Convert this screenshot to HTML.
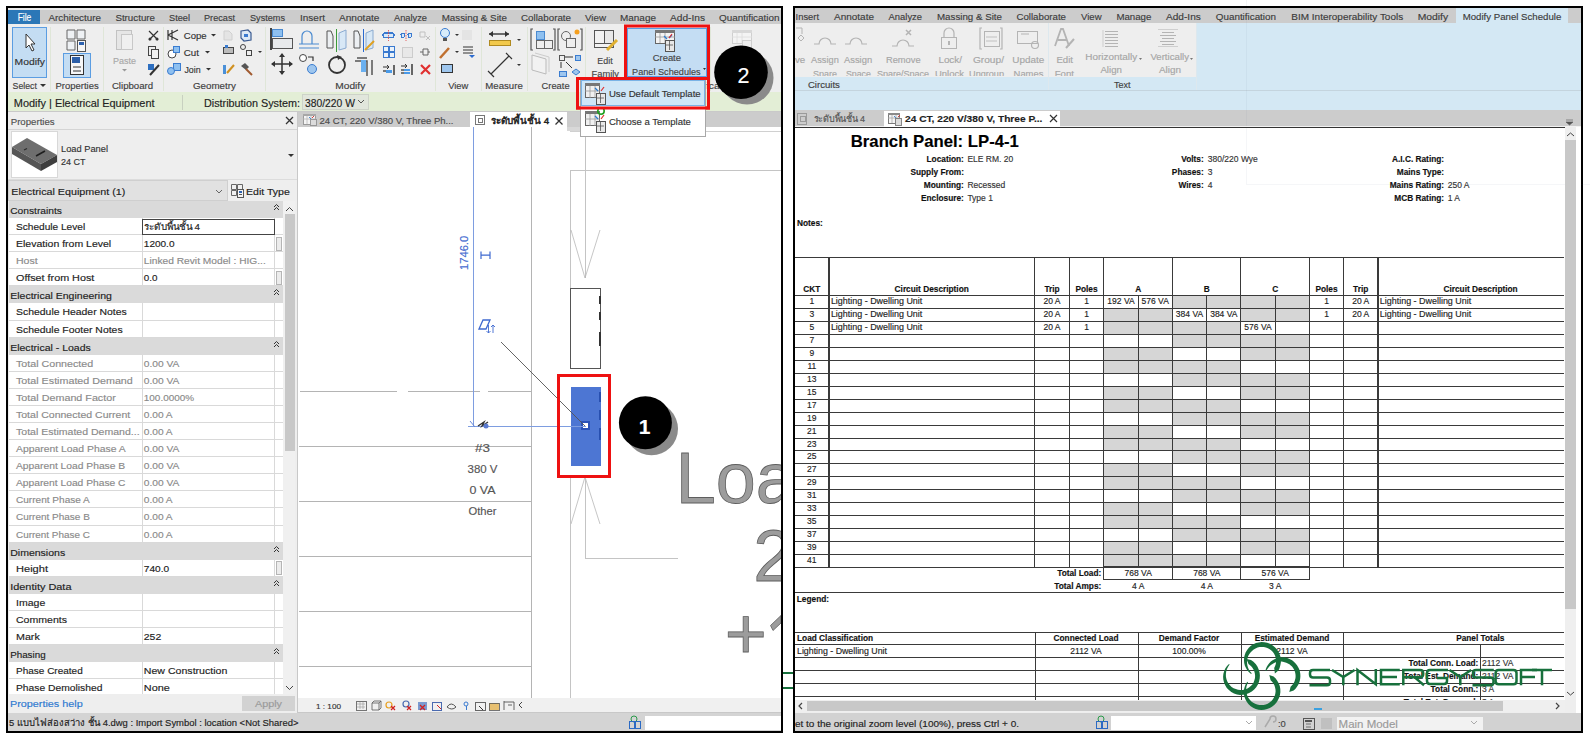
<!DOCTYPE html>
<html><head><meta charset="utf-8"><title>Revit Panel Schedule</title>
<style>
html,body{margin:0;padding:0;background:#fff;}
body{width:1590px;height:742px;overflow:hidden;}
svg{display:block;font-family:"Liberation Sans",sans-serif;}
text{font-family:"Liberation Sans",sans-serif;stroke:currentColor;stroke-width:0.15px;}
</style></head><body>
<svg width="1590" height="742" viewBox="0 0 1590 742">
<rect x="6" y="6" width="777" height="727" fill="#000" shape-rendering="crispEdges" />
<rect x="8" y="8" width="773" height="723" fill="#eeeeee" shape-rendering="crispEdges" />
<rect x="8" y="8" width="773" height="16" fill="#cccccc" shape-rendering="crispEdges" />
<rect x="8" y="8" width="773" height="2" fill="#e8e8e8" shape-rendering="crispEdges" />
<rect x="8" y="10" width="32" height="14" fill="#2b77b7" shape-rendering="crispEdges" />
<rect x="8" y="24" width="773" height="68" fill="#eeeeee" shape-rendering="crispEdges" />
<rect x="8" y="92" width="773" height="19" fill="#e3eed6" shape-rendering="crispEdges" />
<rect x="8" y="111" width="773" height="1" fill="#c9c9c9" shape-rendering="crispEdges" />
<rect x="8" y="112" width="289" height="601" fill="#eeeeee" shape-rendering="crispEdges" />
<rect x="297" y="112" width="1" height="601" fill="#c8c8c8" shape-rendering="crispEdges" />
<rect x="298" y="112" width="483" height="15" fill="#cccccc" shape-rendering="crispEdges" />
<rect x="298" y="127" width="483" height="571" fill="#ffffff" shape-rendering="crispEdges" />
<rect x="298" y="698" width="483" height="14" fill="#f0f0f0" shape-rendering="crispEdges" />
<rect x="8" y="713" width="773" height="18" fill="#d4d4d4" shape-rendering="crispEdges" />
<rect x="793" y="6" width="790" height="727" fill="#000" shape-rendering="crispEdges" />
<rect x="795" y="8" width="786" height="723" fill="#eeeeee" shape-rendering="crispEdges" />
<rect x="795" y="8" width="786" height="15" fill="#cccccc" shape-rendering="crispEdges" />
<rect x="795" y="23" width="786" height="87" fill="#d4e8f4" shape-rendering="crispEdges" />
<rect x="795" y="23" width="401" height="53" fill="#eeeeee" shape-rendering="crispEdges" />
<rect x="795" y="110" width="786" height="16" fill="#cccccc" shape-rendering="crispEdges" />
<rect x="795" y="126" width="786" height="1" fill="#f2f2f2" shape-rendering="crispEdges" />
<rect x="795" y="127" width="786" height="1" fill="#333333" shape-rendering="crispEdges" />
<rect x="795" y="128" width="770" height="572" fill="#ffffff" shape-rendering="crispEdges" />
<rect x="1565" y="127" width="11" height="573" fill="#eeeeee" shape-rendering="crispEdges" />
<rect x="795" y="700" width="770" height="12" fill="#eeeeee" shape-rendering="crispEdges" />
<rect x="795" y="713" width="786" height="18" fill="#d4d4d4" shape-rendering="crispEdges" />
<text x="17.7" y="21" font-size="10" fill="#ffffff" color="#ffffff" textLength="13.6" lengthAdjust="spacingAndGlyphs" >File</text>
<text x="48.5" y="21" font-size="9.4" fill="#3c3c3c" color="#3c3c3c" textLength="52.5" lengthAdjust="spacingAndGlyphs" >Architecture</text>
<text x="115.4" y="21" font-size="9.4" fill="#3c3c3c" color="#3c3c3c" textLength="39.6" lengthAdjust="spacingAndGlyphs" >Structure</text>
<text x="169" y="21" font-size="9.4" fill="#3c3c3c" color="#3c3c3c" textLength="21" lengthAdjust="spacingAndGlyphs" >Steel</text>
<text x="204" y="21" font-size="9.4" fill="#3c3c3c" color="#3c3c3c" textLength="31" lengthAdjust="spacingAndGlyphs" >Precast</text>
<text x="250" y="21" font-size="9.4" fill="#3c3c3c" color="#3c3c3c" textLength="35" lengthAdjust="spacingAndGlyphs" >Systems</text>
<text x="300" y="21" font-size="9.4" fill="#3c3c3c" color="#3c3c3c" textLength="25" lengthAdjust="spacingAndGlyphs" >Insert</text>
<text x="339" y="21" font-size="9.4" fill="#3c3c3c" color="#3c3c3c" textLength="40.5" lengthAdjust="spacingAndGlyphs" >Annotate</text>
<text x="394" y="21" font-size="9.4" fill="#3c3c3c" color="#3c3c3c" textLength="33" lengthAdjust="spacingAndGlyphs" >Analyze</text>
<text x="441.7" y="21" font-size="9.4" fill="#3c3c3c" color="#3c3c3c" textLength="65.3" lengthAdjust="spacingAndGlyphs" >Massing &amp; Site</text>
<text x="521" y="21" font-size="9.4" fill="#3c3c3c" color="#3c3c3c" textLength="50" lengthAdjust="spacingAndGlyphs" >Collaborate</text>
<text x="585" y="21" font-size="9.4" fill="#3c3c3c" color="#3c3c3c" textLength="21" lengthAdjust="spacingAndGlyphs" >View</text>
<text x="620" y="21" font-size="9.4" fill="#3c3c3c" color="#3c3c3c" textLength="36" lengthAdjust="spacingAndGlyphs" >Manage</text>
<text x="670" y="21" font-size="9.4" fill="#3c3c3c" color="#3c3c3c" textLength="35" lengthAdjust="spacingAndGlyphs" >Add-Ins</text>
<text x="719" y="21" font-size="9.4" fill="#3c3c3c" color="#3c3c3c" textLength="60.5" lengthAdjust="spacingAndGlyphs" >Quantification</text>
<text x="12.6" y="89" font-size="9.4" fill="#404040" color="#404040" textLength="24.3" lengthAdjust="spacingAndGlyphs" >Select</text>
<path d="M40 84 h6 l-3 3z" fill="#333" />
<text x="55.5" y="89" font-size="9.4" fill="#404040" color="#404040" textLength="43.2" lengthAdjust="spacingAndGlyphs" >Properties</text>
<text x="111.9" y="89" font-size="9.4" fill="#404040" color="#404040" textLength="41.3" lengthAdjust="spacingAndGlyphs" >Clipboard</text>
<text x="192.9" y="89" font-size="9.4" fill="#404040" color="#404040" textLength="43.0" lengthAdjust="spacingAndGlyphs" >Geometry</text>
<text x="335.3" y="89" font-size="9.4" fill="#404040" color="#404040" textLength="30.0" lengthAdjust="spacingAndGlyphs" >Modify</text>
<text x="448.2" y="89" font-size="9.4" fill="#404040" color="#404040" textLength="20.2" lengthAdjust="spacingAndGlyphs" >View</text>
<text x="485.3" y="89" font-size="9.4" fill="#404040" color="#404040" textLength="37.5" lengthAdjust="spacingAndGlyphs" >Measure</text>
<text x="541.6" y="89" font-size="9.4" fill="#404040" color="#404040" textLength="28.0" lengthAdjust="spacingAndGlyphs" >Create</text>
<rect x="50" y="27" width="1" height="64" fill="#dfe6d8" shape-rendering="crispEdges" />
<rect x="103" y="27" width="1" height="64" fill="#dfe6d8" shape-rendering="crispEdges" />
<rect x="163" y="27" width="1" height="64" fill="#dfe6d8" shape-rendering="crispEdges" />
<rect x="265" y="27" width="1" height="64" fill="#dfe6d8" shape-rendering="crispEdges" />
<rect x="435" y="27" width="1" height="64" fill="#dfe6d8" shape-rendering="crispEdges" />
<rect x="481" y="27" width="1" height="64" fill="#dfe6d8" shape-rendering="crispEdges" />
<rect x="527" y="27" width="1" height="64" fill="#dfe6d8" shape-rendering="crispEdges" />
<rect x="585" y="27" width="1" height="64" fill="#dfe6d8" shape-rendering="crispEdges" />
<text x="13.8" y="106.5" font-size="11" fill="#222" color="#222" textLength="140.7" lengthAdjust="spacingAndGlyphs" >Modify | Electrical Equipment</text>
<rect x="182" y="95" width="1" height="15" fill="#c8d0c0" shape-rendering="crispEdges" />
<text x="204" y="106.5" font-size="11" fill="#222" color="#222" textLength="96" lengthAdjust="spacingAndGlyphs" >Distribution System:</text>
<rect x="302" y="94" width="67" height="16" fill="#e1e6dc" shape-rendering="crispEdges" />
<rect x="302.5" y="94.5" width="66" height="15" fill="none" stroke="#cdd3c8" stroke-width="1" shape-rendering="crispEdges" />
<text x="305" y="107" font-size="11" fill="#222" color="#222" textLength="50" lengthAdjust="spacingAndGlyphs" >380/220 W</text>
<path d="M358 100 l3 3 l3 -3" fill="none" stroke="#555" stroke-width="1" />
<text x="10.7" y="124.5" font-size="9.4" fill="#505050" color="#505050" textLength="44.0" lengthAdjust="spacingAndGlyphs" >Properties</text>
<path d="M286 117 l7 7 M293 117 l-7 7" fill="none" stroke="#333" stroke-width="1.3" />
<rect x="8" y="129" width="289" height="1" fill="#d4d4d4" shape-rendering="crispEdges" />
<rect x="11" y="131" width="47" height="47" fill="#ffffff" shape-rendering="crispEdges" />
<rect x="11.5" y="131.5" width="46" height="46" fill="none" stroke="#d8d8d8" stroke-width="1" shape-rendering="crispEdges" />
<path d="M12 147 L27 138 L57 155 L41 164 Z" fill="#6e6e6e" />
<path d="M12 147 L41 164 L41 171 L12 154 Z" fill="#555555" />
<path d="M41 164 L57 155 L57 162 L41 171 Z" fill="#3e3e3e" />
<path d="M36 156 l9 -5" fill="none" stroke="#1e1e1e" stroke-width="1.6" />
<path d="M24 150 l3 -1.5" fill="none" stroke="#2a2a2a" stroke-width="1.2" />
<text x="61" y="152" font-size="9.4" fill="#333" color="#333" textLength="47" lengthAdjust="spacingAndGlyphs" >Load Panel</text>
<text x="61" y="165" font-size="9.4" fill="#333" color="#333" textLength="24.5" lengthAdjust="spacingAndGlyphs" >24 CT</text>
<path d="M288 154 h6 l-3 3z" fill="#333" />
<rect x="8" y="179" width="289" height="1" fill="#dcdcdc" shape-rendering="crispEdges" />
<rect x="8" y="181" width="219" height="20" fill="#e1e1e1" shape-rendering="crispEdges" />
<rect x="8.5" y="180.5" width="219" height="20" fill="none" stroke="#cfcfcf" stroke-width="1" shape-rendering="crispEdges" />
<text x="11.3" y="194.5" font-size="9.6" fill="#222" color="#222" textLength="114.0" lengthAdjust="spacingAndGlyphs" >Electrical Equipment (1)</text>
<path d="M216 190 l3 3 l3 -3" fill="none" stroke="#666" stroke-width="1" />
<path d="M231.5 184.5 h5 v5 h-5z M231.5 190.5 h5 v5 h-5z M237.5 184.5 h5 v5 h-5z" fill="#f0f0f0" stroke="#666" stroke-width="1" />
<rect x="237.5" y="189.5" width="6" height="8" fill="#f4f4f4" stroke="#555" stroke-width="1" shape-rendering="crispEdges" />
<rect x="239" y="191" width="3" height="2" fill="#2d62b0" shape-rendering="crispEdges" />
<rect x="239" y="194" width="3" height="1" fill="#555" shape-rendering="crispEdges" />
<text x="246" y="194.5" font-size="9.6" fill="#222" color="#222" textLength="43.8" lengthAdjust="spacingAndGlyphs" >Edit Type</text>
<rect x="9" y="201" width="274" height="493" fill="#ffffff" shape-rendering="crispEdges" />
<rect x="9" y="201" width="274" height="17" fill="#dadada" shape-rendering="crispEdges" />
<text x="10.2" y="213.7" font-size="9.4" fill="#222" color="#222" textLength="51.8" lengthAdjust="spacingAndGlyphs" >Constraints</text>
<path d="M274 207 l2.5 -2.5 l2.5 2.5 M274 210 l2.5 -2.5 l2.5 2.5" fill="none" stroke="#333" stroke-width="1" />
<rect x="9" y="234" width="274" height="1" fill="#d9d9d9" shape-rendering="crispEdges" />
<rect x="142" y="218" width="1" height="17" fill="#d9d9d9" shape-rendering="crispEdges" />
<rect x="274" y="218" width="1" height="17" fill="#d9d9d9" shape-rendering="crispEdges" />
<text x="16" y="229.6" font-size="9.4" fill="#222" color="#222" textLength="69.2" lengthAdjust="spacingAndGlyphs" >Schedule Level</text>
<text x="143.8" y="229.6" font-size="9.4" fill="#222" color="#222" textLength="56.2" lengthAdjust="spacingAndGlyphs" >ระดับพื้นชั้น 4</text>
<rect x="9" y="251" width="274" height="1" fill="#d9d9d9" shape-rendering="crispEdges" />
<rect x="142" y="235" width="1" height="17" fill="#d9d9d9" shape-rendering="crispEdges" />
<rect x="274" y="235" width="1" height="17" fill="#d9d9d9" shape-rendering="crispEdges" />
<text x="16" y="246.6" font-size="9.4" fill="#222" color="#222" textLength="95.2" lengthAdjust="spacingAndGlyphs" >Elevation from Level</text>
<text x="143.8" y="246.6" font-size="9.4" fill="#222" color="#222" textLength="30.7" lengthAdjust="spacingAndGlyphs" >1200.0</text>
<rect x="9" y="268" width="274" height="1" fill="#d9d9d9" shape-rendering="crispEdges" />
<rect x="142" y="252" width="1" height="17" fill="#d9d9d9" shape-rendering="crispEdges" />
<rect x="274" y="252" width="1" height="17" fill="#d9d9d9" shape-rendering="crispEdges" />
<text x="16" y="263.6" font-size="9.4" fill="#8a8a8a" color="#8a8a8a" textLength="21.7" lengthAdjust="spacingAndGlyphs" >Host</text>
<text x="143.8" y="263.6" font-size="9.4" fill="#8a8a8a" color="#8a8a8a" textLength="122.0" lengthAdjust="spacingAndGlyphs" >Linked Revit Model : HIG...</text>
<rect x="9" y="285" width="274" height="1" fill="#d9d9d9" shape-rendering="crispEdges" />
<rect x="142" y="269" width="1" height="17" fill="#d9d9d9" shape-rendering="crispEdges" />
<rect x="274" y="269" width="1" height="17" fill="#d9d9d9" shape-rendering="crispEdges" />
<text x="16" y="280.6" font-size="9.4" fill="#222" color="#222" textLength="78.3" lengthAdjust="spacingAndGlyphs" >Offset from Host</text>
<text x="143.8" y="280.6" font-size="9.4" fill="#222" color="#222" textLength="13.7" lengthAdjust="spacingAndGlyphs" >0.0</text>
<rect x="9" y="286" width="274" height="17" fill="#dadada" shape-rendering="crispEdges" />
<text x="10.2" y="298.7" font-size="9.4" fill="#222" color="#222" textLength="101.7" lengthAdjust="spacingAndGlyphs" >Electrical Engineering</text>
<path d="M274 292 l2.5 -2.5 l2.5 2.5 M274 295 l2.5 -2.5 l2.5 2.5" fill="none" stroke="#333" stroke-width="1" />
<rect x="9" y="320" width="274" height="1" fill="#d9d9d9" shape-rendering="crispEdges" />
<rect x="142" y="303" width="1" height="18" fill="#d9d9d9" shape-rendering="crispEdges" />
<rect x="274" y="303" width="1" height="18" fill="#d9d9d9" shape-rendering="crispEdges" />
<text x="16" y="314.6" font-size="9.4" fill="#222" color="#222" textLength="110.8" lengthAdjust="spacingAndGlyphs" >Schedule Header Notes</text>
<rect x="9" y="337" width="274" height="1" fill="#d9d9d9" shape-rendering="crispEdges" />
<rect x="142" y="321" width="1" height="17" fill="#d9d9d9" shape-rendering="crispEdges" />
<rect x="274" y="321" width="1" height="17" fill="#d9d9d9" shape-rendering="crispEdges" />
<text x="16" y="332.6" font-size="9.4" fill="#222" color="#222" textLength="106.6" lengthAdjust="spacingAndGlyphs" >Schedule Footer Notes</text>
<rect x="9" y="338" width="274" height="17" fill="#dadada" shape-rendering="crispEdges" />
<text x="10.2" y="350.7" font-size="9.4" fill="#222" color="#222" textLength="80.6" lengthAdjust="spacingAndGlyphs" >Electrical - Loads</text>
<path d="M274 344 l2.5 -2.5 l2.5 2.5 M274 347 l2.5 -2.5 l2.5 2.5" fill="none" stroke="#333" stroke-width="1" />
<rect x="9" y="371" width="274" height="1" fill="#d9d9d9" shape-rendering="crispEdges" />
<rect x="142" y="355" width="1" height="17" fill="#d9d9d9" shape-rendering="crispEdges" />
<rect x="274" y="355" width="1" height="17" fill="#d9d9d9" shape-rendering="crispEdges" />
<text x="16" y="366.6" font-size="9.4" fill="#8a8a8a" color="#8a8a8a" textLength="77.2" lengthAdjust="spacingAndGlyphs" >Total Connected</text>
<text x="143.8" y="366.6" font-size="9.4" fill="#8a8a8a" color="#8a8a8a" textLength="35.6" lengthAdjust="spacingAndGlyphs" >0.00 VA</text>
<rect x="9" y="388" width="274" height="1" fill="#d9d9d9" shape-rendering="crispEdges" />
<rect x="142" y="372" width="1" height="17" fill="#d9d9d9" shape-rendering="crispEdges" />
<rect x="274" y="372" width="1" height="17" fill="#d9d9d9" shape-rendering="crispEdges" />
<text x="16" y="383.6" font-size="9.4" fill="#8a8a8a" color="#8a8a8a" textLength="116.8" lengthAdjust="spacingAndGlyphs" >Total Estimated Demand</text>
<text x="143.8" y="383.6" font-size="9.4" fill="#8a8a8a" color="#8a8a8a" textLength="35.6" lengthAdjust="spacingAndGlyphs" >0.00 VA</text>
<rect x="9" y="405" width="274" height="1" fill="#d9d9d9" shape-rendering="crispEdges" />
<rect x="142" y="389" width="1" height="17" fill="#d9d9d9" shape-rendering="crispEdges" />
<rect x="274" y="389" width="1" height="17" fill="#d9d9d9" shape-rendering="crispEdges" />
<text x="16" y="400.6" font-size="9.4" fill="#8a8a8a" color="#8a8a8a" textLength="99.8" lengthAdjust="spacingAndGlyphs" >Total Demand Factor</text>
<text x="143.8" y="400.6" font-size="9.4" fill="#8a8a8a" color="#8a8a8a" textLength="50.3" lengthAdjust="spacingAndGlyphs" >100.0000%</text>
<rect x="9" y="422" width="274" height="1" fill="#d9d9d9" shape-rendering="crispEdges" />
<rect x="142" y="406" width="1" height="17" fill="#d9d9d9" shape-rendering="crispEdges" />
<rect x="274" y="406" width="1" height="17" fill="#d9d9d9" shape-rendering="crispEdges" />
<text x="16" y="417.6" font-size="9.4" fill="#8a8a8a" color="#8a8a8a" textLength="114.2" lengthAdjust="spacingAndGlyphs" >Total Connected Current</text>
<text x="143.8" y="417.6" font-size="9.4" fill="#8a8a8a" color="#8a8a8a" textLength="28.8" lengthAdjust="spacingAndGlyphs" >0.00 A</text>
<rect x="9" y="439" width="274" height="1" fill="#d9d9d9" shape-rendering="crispEdges" />
<rect x="142" y="423" width="1" height="17" fill="#d9d9d9" shape-rendering="crispEdges" />
<rect x="274" y="423" width="1" height="17" fill="#d9d9d9" shape-rendering="crispEdges" />
<text x="16" y="434.6" font-size="9.4" fill="#8a8a8a" color="#8a8a8a" textLength="123.6" lengthAdjust="spacingAndGlyphs" >Total Estimated Demand...</text>
<text x="143.8" y="434.6" font-size="9.4" fill="#8a8a8a" color="#8a8a8a" textLength="28.8" lengthAdjust="spacingAndGlyphs" >0.00 A</text>
<rect x="9" y="456" width="274" height="1" fill="#d9d9d9" shape-rendering="crispEdges" />
<rect x="142" y="440" width="1" height="17" fill="#d9d9d9" shape-rendering="crispEdges" />
<rect x="274" y="440" width="1" height="17" fill="#d9d9d9" shape-rendering="crispEdges" />
<text x="16" y="451.6" font-size="9.4" fill="#8a8a8a" color="#8a8a8a" textLength="109.7" lengthAdjust="spacingAndGlyphs" >Apparent Load Phase A</text>
<text x="143.8" y="451.6" font-size="9.4" fill="#8a8a8a" color="#8a8a8a" textLength="35.6" lengthAdjust="spacingAndGlyphs" >0.00 VA</text>
<rect x="9" y="473" width="274" height="1" fill="#d9d9d9" shape-rendering="crispEdges" />
<rect x="142" y="457" width="1" height="17" fill="#d9d9d9" shape-rendering="crispEdges" />
<rect x="274" y="457" width="1" height="17" fill="#d9d9d9" shape-rendering="crispEdges" />
<text x="16" y="468.6" font-size="9.4" fill="#8a8a8a" color="#8a8a8a" textLength="109.2" lengthAdjust="spacingAndGlyphs" >Apparent Load Phase B</text>
<text x="143.8" y="468.6" font-size="9.4" fill="#8a8a8a" color="#8a8a8a" textLength="35.6" lengthAdjust="spacingAndGlyphs" >0.00 VA</text>
<rect x="9" y="490" width="274" height="1" fill="#d9d9d9" shape-rendering="crispEdges" />
<rect x="142" y="474" width="1" height="17" fill="#d9d9d9" shape-rendering="crispEdges" />
<rect x="274" y="474" width="1" height="17" fill="#d9d9d9" shape-rendering="crispEdges" />
<text x="16" y="485.6" font-size="9.4" fill="#8a8a8a" color="#8a8a8a" textLength="109.5" lengthAdjust="spacingAndGlyphs" >Apparent Load Phase C</text>
<text x="143.8" y="485.6" font-size="9.4" fill="#8a8a8a" color="#8a8a8a" textLength="35.6" lengthAdjust="spacingAndGlyphs" >0.00 VA</text>
<rect x="9" y="507" width="274" height="1" fill="#d9d9d9" shape-rendering="crispEdges" />
<rect x="142" y="491" width="1" height="17" fill="#d9d9d9" shape-rendering="crispEdges" />
<rect x="274" y="491" width="1" height="17" fill="#d9d9d9" shape-rendering="crispEdges" />
<text x="16" y="502.6" font-size="9.4" fill="#8a8a8a" color="#8a8a8a" textLength="73.8" lengthAdjust="spacingAndGlyphs" >Current Phase A</text>
<text x="143.8" y="502.6" font-size="9.4" fill="#8a8a8a" color="#8a8a8a" textLength="28.8" lengthAdjust="spacingAndGlyphs" >0.00 A</text>
<rect x="9" y="525" width="274" height="1" fill="#d9d9d9" shape-rendering="crispEdges" />
<rect x="142" y="508" width="1" height="18" fill="#d9d9d9" shape-rendering="crispEdges" />
<rect x="274" y="508" width="1" height="18" fill="#d9d9d9" shape-rendering="crispEdges" />
<text x="16" y="519.6" font-size="9.4" fill="#8a8a8a" color="#8a8a8a" textLength="73.8" lengthAdjust="spacingAndGlyphs" >Current Phase B</text>
<text x="143.8" y="519.6" font-size="9.4" fill="#8a8a8a" color="#8a8a8a" textLength="28.8" lengthAdjust="spacingAndGlyphs" >0.00 A</text>
<rect x="9" y="542" width="274" height="1" fill="#d9d9d9" shape-rendering="crispEdges" />
<rect x="142" y="526" width="1" height="17" fill="#d9d9d9" shape-rendering="crispEdges" />
<rect x="274" y="526" width="1" height="17" fill="#d9d9d9" shape-rendering="crispEdges" />
<text x="16" y="537.6" font-size="9.4" fill="#8a8a8a" color="#8a8a8a" textLength="73.8" lengthAdjust="spacingAndGlyphs" >Current Phase C</text>
<text x="143.8" y="537.6" font-size="9.4" fill="#8a8a8a" color="#8a8a8a" textLength="28.8" lengthAdjust="spacingAndGlyphs" >0.00 A</text>
<rect x="9" y="543" width="274" height="17" fill="#dadada" shape-rendering="crispEdges" />
<text x="10.2" y="555.7" font-size="9.4" fill="#222" color="#222" textLength="55.0" lengthAdjust="spacingAndGlyphs" >Dimensions</text>
<path d="M274 549 l2.5 -2.5 l2.5 2.5 M274 552 l2.5 -2.5 l2.5 2.5" fill="none" stroke="#333" stroke-width="1" />
<rect x="9" y="576" width="274" height="1" fill="#d9d9d9" shape-rendering="crispEdges" />
<rect x="142" y="560" width="1" height="17" fill="#d9d9d9" shape-rendering="crispEdges" />
<rect x="274" y="560" width="1" height="17" fill="#d9d9d9" shape-rendering="crispEdges" />
<text x="16" y="571.6" font-size="9.4" fill="#222" color="#222" textLength="32" lengthAdjust="spacingAndGlyphs" >Height</text>
<text x="143.8" y="571.6" font-size="9.4" fill="#222" color="#222" textLength="25.3" lengthAdjust="spacingAndGlyphs" >740.0</text>
<rect x="9" y="577" width="274" height="17" fill="#dadada" shape-rendering="crispEdges" />
<text x="10.2" y="589.7" font-size="9.4" fill="#222" color="#222" textLength="61.3" lengthAdjust="spacingAndGlyphs" >Identity Data</text>
<path d="M274 583 l2.5 -2.5 l2.5 2.5 M274 586 l2.5 -2.5 l2.5 2.5" fill="none" stroke="#333" stroke-width="1" />
<rect x="9" y="610" width="274" height="1" fill="#d9d9d9" shape-rendering="crispEdges" />
<rect x="142" y="594" width="1" height="17" fill="#d9d9d9" shape-rendering="crispEdges" />
<rect x="274" y="594" width="1" height="17" fill="#d9d9d9" shape-rendering="crispEdges" />
<text x="16" y="605.6" font-size="9.4" fill="#222" color="#222" textLength="29.3" lengthAdjust="spacingAndGlyphs" >Image</text>
<rect x="9" y="627" width="274" height="1" fill="#d9d9d9" shape-rendering="crispEdges" />
<rect x="142" y="611" width="1" height="17" fill="#d9d9d9" shape-rendering="crispEdges" />
<rect x="274" y="611" width="1" height="17" fill="#d9d9d9" shape-rendering="crispEdges" />
<text x="16" y="622.6" font-size="9.4" fill="#222" color="#222" textLength="51" lengthAdjust="spacingAndGlyphs" >Comments</text>
<rect x="9" y="644" width="274" height="1" fill="#d9d9d9" shape-rendering="crispEdges" />
<rect x="142" y="628" width="1" height="17" fill="#d9d9d9" shape-rendering="crispEdges" />
<rect x="274" y="628" width="1" height="17" fill="#d9d9d9" shape-rendering="crispEdges" />
<text x="16" y="639.6" font-size="9.4" fill="#222" color="#222" textLength="23.8" lengthAdjust="spacingAndGlyphs" >Mark</text>
<text x="143.8" y="639.6" font-size="9.4" fill="#222" color="#222" textLength="17.4" lengthAdjust="spacingAndGlyphs" >252</text>
<rect x="9" y="645" width="274" height="17" fill="#dadada" shape-rendering="crispEdges" />
<text x="10.2" y="657.7" font-size="9.4" fill="#222" color="#222" textLength="35.4" lengthAdjust="spacingAndGlyphs" >Phasing</text>
<path d="M274 651 l2.5 -2.5 l2.5 2.5 M274 654 l2.5 -2.5 l2.5 2.5" fill="none" stroke="#333" stroke-width="1" />
<rect x="9" y="678" width="274" height="1" fill="#d9d9d9" shape-rendering="crispEdges" />
<rect x="142" y="662" width="1" height="17" fill="#d9d9d9" shape-rendering="crispEdges" />
<rect x="274" y="662" width="1" height="17" fill="#d9d9d9" shape-rendering="crispEdges" />
<text x="16" y="673.6" font-size="9.4" fill="#222" color="#222" textLength="66.7" lengthAdjust="spacingAndGlyphs" >Phase Created</text>
<text x="143.8" y="673.6" font-size="9.4" fill="#222" color="#222" textLength="83.6" lengthAdjust="spacingAndGlyphs" >New Construction</text>
<rect x="9" y="695" width="274" height="1" fill="#d9d9d9" shape-rendering="crispEdges" />
<rect x="142" y="679" width="1" height="17" fill="#d9d9d9" shape-rendering="crispEdges" />
<rect x="274" y="679" width="1" height="17" fill="#d9d9d9" shape-rendering="crispEdges" />
<text x="16" y="690.6" font-size="9.4" fill="#222" color="#222" textLength="86.4" lengthAdjust="spacingAndGlyphs" >Phase Demolished</text>
<text x="143.8" y="690.6" font-size="9.4" fill="#222" color="#222" textLength="26.0" lengthAdjust="spacingAndGlyphs" >None</text>
<rect x="142.5" y="219.5" width="132" height="15" fill="none" stroke="#444" stroke-width="1.2" shape-rendering="crispEdges" />
<rect x="276" y="237" width="6" height="14" fill="#ececec" shape-rendering="crispEdges" />
<rect x="276.5" y="237.5" width="5" height="13" fill="none" stroke="#b5b5b5" stroke-width="1" shape-rendering="crispEdges" />
<rect x="276" y="271" width="6" height="14" fill="#ececec" shape-rendering="crispEdges" />
<rect x="276.5" y="271.5" width="5" height="13" fill="none" stroke="#b5b5b5" stroke-width="1" shape-rendering="crispEdges" />
<rect x="276" y="561" width="6" height="14" fill="#ececec" shape-rendering="crispEdges" />
<rect x="276.5" y="561.5" width="5" height="13" fill="none" stroke="#b5b5b5" stroke-width="1" shape-rendering="crispEdges" />
<rect x="283" y="201" width="12" height="493" fill="#f0f0f0" shape-rendering="crispEdges" />
<rect x="285" y="214" width="10" height="237" fill="#c8c8c8" shape-rendering="crispEdges" />
<path d="M286 211 l3.5 -3.5 l3.5 3.5" fill="none" stroke="#444" stroke-width="1" />
<path d="M286 686 l3.5 3.5 l3.5 -3.5" fill="none" stroke="#444" stroke-width="1" />
<rect x="8" y="694" width="289" height="19" fill="#eeeeee" shape-rendering="crispEdges" />
<text x="10" y="706.5" font-size="9.6" fill="#2f79d0" color="#2f79d0" textLength="72.7" lengthAdjust="spacingAndGlyphs" >Properties help</text>
<rect x="242" y="696" width="53" height="15" fill="#d2d2d2" shape-rendering="crispEdges" />
<text x="255" y="707" font-size="9.4" fill="#9a9a9a" color="#9a9a9a" textLength="27" lengthAdjust="spacingAndGlyphs" >Apply</text>
<rect x="303" y="114" width="13" height="11" fill="#f4f4f4" shape-rendering="crispEdges" />
<rect x="303.5" y="114.5" width="12" height="10" fill="none" stroke="#9a9a9a" stroke-width="1" shape-rendering="crispEdges" />
<rect x="303" y="114" width="13" height="2" fill="#a8a8a8" shape-rendering="crispEdges" />
<path d="M307 116 v8 M311 116 v8 M303 119 h13" fill="none" stroke="#b8b8b8" stroke-width="0.8" />
<rect x="310" y="119" width="6" height="6" fill="#dcdcdc" stroke="#8a8a8a" stroke-width="0.8" shape-rendering="crispEdges" />
<path d="M309 117 l2 2" fill="none" stroke="#4a8ad0" stroke-width="1" />
<path d="M314 116 l-2 2" fill="none" stroke="#d04040" stroke-width="1" />
<text x="319.5" y="124" font-size="9.4" fill="#4a4a4a" color="#4a4a4a" textLength="134.0" lengthAdjust="spacingAndGlyphs" >24 CT, 220 V/380 V, Three Ph...</text>
<rect x="470" y="112" width="97" height="15" fill="#ffffff" shape-rendering="crispEdges" />
<rect x="475.5" y="115.5" width="9" height="9" fill="none" stroke="#777" stroke-width="1" shape-rendering="crispEdges" />
<rect x="478" y="118" width="4" height="4" fill="none" stroke="#777" stroke-width="1" shape-rendering="crispEdges" />
<text x="491" y="124" font-size="9.6" fill="#222" color="#222" textLength="58.2" lengthAdjust="spacingAndGlyphs" style="stroke-width:0.45px">ระดับพื้นชั้น 4</text>
<path d="M555.5 117.5 l7 7 M562.5 117.5 l-7 7" fill="none" stroke="#333" stroke-width="1.3" />
<defs><clipPath id="clipL"><rect x="298" y="127" width="483" height="571"/></clipPath></defs><g clip-path="url(#clipL)">
<rect x="300" y="391" width="97" height="1" fill="#b4b4b4" shape-rendering="crispEdges" />
<rect x="408" y="391" width="72" height="1" fill="#b4b4b4" shape-rendering="crispEdges" />
<rect x="488" y="391" width="43" height="1" fill="#b4b4b4" shape-rendering="crispEdges" />
<rect x="299" y="446" width="232" height="1" fill="#b4b4b4" shape-rendering="crispEdges" />
<rect x="299" y="501" width="232" height="1" fill="#b4b4b4" shape-rendering="crispEdges" />
<rect x="299" y="556" width="232" height="1" fill="#b4b4b4" shape-rendering="crispEdges" />
<rect x="299" y="611" width="232" height="1" fill="#b4b4b4" shape-rendering="crispEdges" />
<rect x="299" y="666" width="232" height="1" fill="#b4b4b4" shape-rendering="crispEdges" />
<rect x="531" y="127" width="1" height="571" fill="#b4b4b4" shape-rendering="crispEdges" />
<rect x="570" y="170" width="211" height="1" fill="#c4c4c4" shape-rendering="crispEdges" />
<rect x="570" y="170" width="1" height="10" fill="#c4c4c4" shape-rendering="crispEdges" />
<rect x="585" y="127" width="1" height="151" fill="#c4c4c4" shape-rendering="crispEdges" />
<rect x="570" y="131" width="211" height="1" fill="#d0d0d0" shape-rendering="crispEdges" />
<rect x="567" y="127" width="14" height="4" fill="#d8d8d8" shape-rendering="crispEdges" />
<rect x="570" y="170" width="1" height="120" fill="#c4c4c4" shape-rendering="crispEdges" />
<path d="M571 230 L585 278 L600 230" fill="none" stroke="#b8b8b8" stroke-width="0.8" />
<rect x="570.5" y="288.5" width="30" height="80" fill="none" stroke="#555" stroke-width="1" shape-rendering="crispEdges" />
<rect x="599" y="296" width="2" height="8" fill="#333" shape-rendering="crispEdges" />
<rect x="599" y="312" width="2" height="8" fill="#333" shape-rendering="crispEdges" />
<rect x="599" y="332" width="2" height="14" fill="#333" shape-rendering="crispEdges" />
<rect x="571" y="387" width="30" height="79" fill="#4d76d3" shape-rendering="crispEdges" />
<rect x="599" y="392" width="2" height="10" fill="#2850b0" shape-rendering="crispEdges" />
<rect x="599" y="410" width="2" height="10" fill="#2850b0" shape-rendering="crispEdges" />
<rect x="599" y="428" width="2" height="12" fill="#2850b0" shape-rendering="crispEdges" />
<rect x="581" y="421" width="9" height="9" fill="#ffffff" shape-rendering="crispEdges" />
<rect x="582" y="422" width="7" height="7" fill="none" stroke="#2a52b8" stroke-width="1.2" shape-rendering="crispEdges" />
<path d="M571 524 L585 477 L600 524" fill="none" stroke="#b8b8b8" stroke-width="0.8" />
<rect x="570" y="477" width="1" height="221" fill="#c4c4c4" shape-rendering="crispEdges" />
<rect x="585" y="477" width="1" height="81" fill="#c4c4c4" shape-rendering="crispEdges" />
<rect x="585" y="558" width="93" height="1" fill="#c4c4c4" shape-rendering="crispEdges" />
<rect x="473" y="127" width="1" height="300" fill="#7e9de0" shape-rendering="crispEdges" />
<rect x="468" y="426" width="118" height="1" fill="#7e9de0" shape-rendering="crispEdges" />
<path d="M470 421 l5 6" fill="none" stroke="#6a8ad8" stroke-width="1" />
<text x="468" y="270" font-size="11.5" fill="#3f6ad0" color="#3f6ad0" textLength="34.2" lengthAdjust="spacingAndGlyphs" transform="rotate(-90 468 270)">1746.0</text>
<path d="M481 251.5 v7.5 M490 251.5 v7.5 M481 255.2 h9" fill="none" stroke="#3f6ad0" stroke-width="1.2" />
<path d="M479 329 l4 -9 h7 l-4 9z" fill="none" stroke="#3f6ad0" stroke-width="1.3" />
<path d="M488.5 325 v8 M486.5 331 l2 2 l2 -2 M493 333 v-8 M491 327 l2 -2 l2 2" fill="none" stroke="#3f6ad0" stroke-width="0.9" />
<path d="M501 342 L585 426" fill="none" stroke="#555" stroke-width="0.9" />
<path d="M478 426 l6 -4 l-2 4 l6 -4" fill="none" stroke="#333" stroke-width="1.4" />
<circle cx="486" cy="426" r="2.5" fill="#5a7ad0"/>
<text x="475.0" y="451.5" font-size="11" fill="#555" color="#555" textLength="15.0" lengthAdjust="spacingAndGlyphs" >#3</text>
<text x="467.5" y="472.5" font-size="11" fill="#555" color="#555" textLength="30.0" lengthAdjust="spacingAndGlyphs" >380 V</text>
<text x="469.5" y="494" font-size="11" fill="#555" color="#555" textLength="26.0" lengthAdjust="spacingAndGlyphs" >0 VA</text>
<text x="468.5" y="514.5" font-size="11" fill="#555" color="#555" textLength="28.0" lengthAdjust="spacingAndGlyphs" >Other</text>
<g font-size="72" fill="#9c9c9c" style="stroke:#5e5e5e;stroke-width:0.8px"><text x="675.7" y="502.5" style="stroke:#5e5e5e;stroke-width:0.8px">Loa</text><text x="753.3" y="581" style="stroke:#5e5e5e;stroke-width:0.8px">2</text><text x="724.7" y="657.6" style="stroke:#5e5e5e;stroke-width:0.8px">+</text></g>
<path d="M770.5 625.5 L781 615.5 L781 623 L773 630.5 Z" fill="#9c9c9c" stroke="#5e5e5e" stroke-width="0.8" />
</g>
<rect x="298" y="698" width="483" height="14" fill="#f0f0f0" shape-rendering="crispEdges" />
<rect x="298" y="712" width="483" height="1" fill="#c8c8c8" shape-rendering="crispEdges" />
<text x="316" y="709" font-size="8" fill="#333" color="#333" textLength="25" lengthAdjust="spacingAndGlyphs" >1 : 100</text>
<rect x="356" y="701" width="10" height="9" fill="none" stroke="#555" stroke-width="0.8" shape-rendering="crispEdges" />
<path d="M357 704 h8 M357 707 h8 M360 702 v7 M363 702 v7" fill="none" stroke="#999" stroke-width="0.6" />
<path d="M372 703 h7 v7 h-7z M372 703 l2 -2 h7 l-2 2 M381 701 v7 l-2 2" fill="none" stroke="#555" stroke-width="0.8" />
<circle cx="389" cy="705" r="3" fill="none" stroke="#e8a020" stroke-width="1.2"/>
<path d="M391 706 l4 4 M395 706 l-4 4" fill="none" stroke="#d02020" stroke-width="1.2" />
<circle cx="406" cy="704" r="3" fill="none" stroke="#4a6ab0" stroke-width="1.2"/>
<path d="M407 706 l4 4 M411 706 l-4 4" fill="none" stroke="#d02020" stroke-width="1.2" />
<rect x="418" y="702" width="9" height="8" fill="#7a9ad0" shape-rendering="crispEdges" />
<path d="M420 705 l5 5 M425 705 l-5 5" fill="none" stroke="#d02020" stroke-width="1.3" />
<rect x="432" y="702" width="9" height="8" fill="none" stroke="#4a6ab0" stroke-width="1" shape-rendering="crispEdges" />
<path d="M437 705 l4 4" fill="none" stroke="#d02020" stroke-width="1" />
<path d="M447 707 q4 -6 9 0 q-4 4 -9 0" fill="none" stroke="#555" stroke-width="1" />
<circle cx="466" cy="704" r="2" fill="none" stroke="#3a7ad0" stroke-width="1"/>
<rect x="465.5" y="706" width="1" height="4" fill="#3a7ad0" shape-rendering="crispEdges" />
<rect x="475" y="702" width="10" height="8" fill="none" stroke="#555" stroke-width="0.9" shape-rendering="crispEdges" />
<path d="M479 706 l4 4" fill="none" stroke="#333" stroke-width="1" />
<rect x="489" y="703" width="10" height="7" fill="#e8c070" stroke="#555" stroke-width="0.8" shape-rendering="crispEdges" />
<path d="M504 701 v9 M504 702 h10 v8 M508 705 h4" fill="none" stroke="#555" stroke-width="0.9" />
<path d="M522 702 l-3 3 l3 3" fill="none" stroke="#444" stroke-width="1" />
<rect x="8" y="713" width="773" height="18" fill="#d4d4d4" shape-rendering="crispEdges" />
<text x="9" y="725.5" font-size="9.4" fill="#222" color="#222" textLength="289.4" lengthAdjust="spacingAndGlyphs" >5 แบบไฟส่องสว่าง ชั้น 4.dwg : Import Symbol : location &lt;Not Shared&gt;</text>
<rect x="645" y="716" width="136" height="14" fill="#ffffff" shape-rendering="crispEdges" />
<circle cx="634" cy="719" r="3" fill="none" stroke="#2a9a4a" stroke-width="1"/>
<rect x="629" y="721" width="5" height="7" fill="none" stroke="#2b6ac4" stroke-width="1" shape-rendering="crispEdges" />
<rect x="635" y="721" width="5" height="7" fill="none" stroke="#2b6ac4" stroke-width="1" shape-rendering="crispEdges" />
<rect x="12" y="27" width="35" height="51" fill="#c4ddf3" shape-rendering="crispEdges" />
<rect x="12.5" y="27.5" width="34" height="50" fill="none" stroke="#5b9de2" stroke-width="1" shape-rendering="crispEdges" />
<path d="M26 34 v14 l3 -3 l3 6 l2 -1 l-3 -6 h4 z" fill="#ffffff" stroke="#333" stroke-width="1" />
<text x="14.6" y="64.5" font-size="9.4" fill="#333" color="#333" textLength="30.4" lengthAdjust="spacingAndGlyphs" >Modify</text>
<path d="M67 30 h8 v9 h-8z M77 30 h8 v9 h-8z M67 41 h8 v9 h-8z" fill="#eef1f4" stroke="#666" stroke-width="1" />
<rect x="77" y="40" width="9" height="12" fill="#f6f6f6" shape-rendering="crispEdges" />
<rect x="77.5" y="40.5" width="8" height="11" fill="none" stroke="#555" stroke-width="1" shape-rendering="crispEdges" />
<rect x="79" y="42" width="5" height="3" fill="#2d62b0" shape-rendering="crispEdges" />
<rect x="63" y="53" width="28" height="25" fill="#c4ddf3" shape-rendering="crispEdges" />
<rect x="63.5" y="53.5" width="27" height="24" fill="none" stroke="#5b9de2" stroke-width="1" shape-rendering="crispEdges" />
<rect x="70" y="55" width="14" height="20" fill="#f7f7f7" shape-rendering="crispEdges" />
<rect x="70.5" y="55.5" width="13" height="19" fill="none" stroke="#333" stroke-width="1" shape-rendering="crispEdges" />
<rect x="72" y="57" width="8" height="6" fill="#2d5fa8" shape-rendering="crispEdges" />
<path d="M73 67 h8 M73 71 h8" fill="none" stroke="#333" stroke-width="1" />
<rect x="116" y="30" width="16" height="20" fill="#e6e6e6" shape-rendering="crispEdges" />
<rect x="116.5" y="30.5" width="15" height="19" fill="none" stroke="#c2c2c2" stroke-width="1" shape-rendering="crispEdges" />
<rect x="121" y="34" width="12" height="16" fill="#f0f0f0" shape-rendering="crispEdges" />
<rect x="121.5" y="34.5" width="11" height="15" fill="none" stroke="#c8c8c8" stroke-width="1" shape-rendering="crispEdges" />
<text x="113" y="63.6" font-size="9.4" fill="#a8a8a8" color="#a8a8a8" textLength="23" lengthAdjust="spacingAndGlyphs" >Paste</text>
<path d="M122 69 h5 l-2.5 2.5z" fill="#999" />
<path d="M149 31 l9 9 M158 31 l-9 9" fill="none" stroke="#333" stroke-width="1.2" />
<circle cx="150" cy="39" r="1.5" fill="#333"/><circle cx="157" cy="39" r="1.5" fill="#333"/>
<rect x="148.5" y="46.5" width="7" height="9" fill="none" stroke="#444" stroke-width="1" shape-rendering="crispEdges" />
<rect x="151.5" y="49.5" width="7" height="9" fill="#f2f2f2" stroke="#444" stroke-width="1" shape-rendering="crispEdges" />
<rect x="148" y="64" width="6" height="6" fill="#2d6fc0" shape-rendering="crispEdges" />
<path d="M150 75 l9 -10" fill="none" stroke="#333" stroke-width="2" />
<path d="M168 30 v10 M168 35 l10 -5 M168 35 l10 5 M172 30 v10" fill="none" stroke="#333" stroke-width="1.2" />
<text x="183.8" y="38.7" font-size="9.4" fill="#333" color="#333" textLength="22.9" lengthAdjust="spacingAndGlyphs" >Cope</text>
<path d="M211 34 h5 l-2.5 2.5z" fill="#333" />
<circle cx="172" cy="54" r="4" fill="#fff" stroke="#444"/>
<rect x="173" y="46" width="7" height="7" fill="#8ec0f0" shape-rendering="crispEdges" />
<rect x="173.5" y="46.5" width="6" height="6" fill="none" stroke="#3a7cd0" stroke-width="1" shape-rendering="crispEdges" />
<text x="183.8" y="55.7" font-size="9.4" fill="#333" color="#333" textLength="15.2" lengthAdjust="spacingAndGlyphs" >Cut</text>
<path d="M205 51 h5 l-2.5 2.5z" fill="#333" />
<rect x="173" y="63" width="7" height="7" fill="#8ec0f0" stroke="#3a7cd0" stroke-width="1" shape-rendering="crispEdges" />
<circle cx="171" cy="71" r="3.5" fill="#8ec0f0" stroke="#3a7cd0"/>
<text x="184.4" y="72.7" font-size="9.4" fill="#333" color="#333" textLength="16.2" lengthAdjust="spacingAndGlyphs" >Join</text>
<path d="M206 68 h5 l-2.5 2.5z" fill="#333" />
<path d="M224 31 h5 l3 3 v6 h-8z" fill="#e4e4e4" stroke="#d0d0d0" stroke-width="1" />
<path d="M241 31 l7 -1 l3 3 v7 l-7 1 l-3 -3z" fill="#dce9f6" stroke="#3a5a90" stroke-width="1.2" />
<rect x="244" y="34" width="4" height="3" fill="#3a7ad0" shape-rendering="crispEdges" />
<rect x="223" y="47" width="10" height="6" fill="#bbb" stroke="#444" stroke-width="1" shape-rendering="crispEdges" />
<rect x="225" y="45" width="3" height="3" fill="#3a7cd0" shape-rendering="crispEdges" />
<circle cx="243" cy="47" r="2.5" fill="none" stroke="#444"/>
<rect x="246" y="50" width="5" height="5" fill="none" stroke="#444" stroke-width="1" shape-rendering="crispEdges" />
<path d="M258 51 h4 l-2 2z" fill="#333" />
<rect x="223" y="65" width="3" height="9" fill="#4a90d8" shape-rendering="crispEdges" />
<path d="M227 73 l7 -8" fill="none" stroke="#d09020" stroke-width="2" />
<path d="M241 66 l4 -3 l4 4 l-3 3z" fill="#555" />
<path d="M246 69 l6 6" fill="none" stroke="#a05a30" stroke-width="2" />
<rect x="270" y="28" width="2" height="22" fill="#444" shape-rendering="crispEdges" />
<rect x="272" y="29" width="10" height="7" fill="#8ec0f0" stroke="#4a8ad0" stroke-width="1" shape-rendering="crispEdges" />
<rect x="272" y="38" width="20" height="10" fill="#e8eaec" stroke="#555" stroke-width="1" shape-rendering="crispEdges" />
<path d="M299 48 h20 M299 44 h20 M302 44 v-8 a5 5 0 0 1 10 0 v8" fill="none" stroke="#4a8ad0" stroke-width="1.2" />
<path d="M327 48 v-17 h4 l2 5 v12z" fill="#eceff2" stroke="#555" stroke-width="1" />
<rect x="336" y="29" width="1" height="23" fill="#3a9a3a" shape-rendering="crispEdges" />
<path d="M339 33 l7 -3 v18 l-7 2z" fill="#d8e8f6" stroke="#8aaad0" stroke-width="1" />
<path d="M354 48 v-17 h4 l2 5 v12z" fill="#eceff2" stroke="#555" stroke-width="1" />
<rect x="363" y="29" width="1" height="23" fill="#2a6ad0" shape-rendering="crispEdges" />
<path d="M366 33 l7 -3 v18 l-7 2z" fill="#d8e8f6" stroke="#8aaad0" stroke-width="1" />
<path d="M365 50 l9 -9" fill="none" stroke="#e0a020" stroke-width="2" />
<path d="M282 54 v20 M272 64 h20" fill="none" stroke="#333" stroke-width="1.5" />
<path d="M282 53 l-3 4 h6z M282 75 l-3 -4 h6z M271 64 l4 -3 v6z M293 64 l-4 -3 v6z" fill="#333" />
<circle cx="303" cy="58" r="3.5" fill="#fff" stroke="#444"/>
<circle cx="312" cy="69" r="4.5" fill="#9ec6ee" stroke="#3a7cd0"/>
<path d="M308 57 h5 v4" fill="none" stroke="#333" stroke-width="1.2" />
<circle cx="337" cy="65" r="8" fill="none" stroke="#333" stroke-width="1.8"/>
<path d="M337 55 l5 2 l-4 3z" fill="#333" />
<path d="M355 61 h12 v15 M357 58 h10 M372 60 v15" fill="none" stroke="#555" stroke-width="1.5" />
<rect x="361" y="60" width="5" height="12" fill="#6ab0f0" shape-rendering="crispEdges" />
<rect x="383" y="33" width="11" height="4.5" fill="#d8e8f8" stroke="#3a7ad0" stroke-width="1.2" shape-rendering="crispEdges" rx="2"/>
<path d="M388.5 30 v11" fill="none" stroke="#e04040" stroke-width="0.8" stroke-dasharray="1.5 1"/>
<rect x="401" y="33" width="3.5" height="4.5" fill="#d8e8f8" stroke="#3a7ad0" stroke-width="1" shape-rendering="crispEdges" rx="1.5"/>
<rect x="408" y="33" width="3.5" height="4.5" fill="#d8e8f8" stroke="#3a7ad0" stroke-width="1" shape-rendering="crispEdges" rx="1.5"/>
<path d="M406 30 v11" fill="none" stroke="#e04040" stroke-width="0.8" stroke-dasharray="1.5 1"/>
<path d="M420 32 h5 v5 h-5z M426 36 l4 4 M430 36 l-4 4" fill="none" stroke="#c0c0c0" stroke-width="1" />
<rect x="383" y="46" width="5" height="5" fill="#eaf2fa" stroke="#3a7ad0" stroke-width="1" shape-rendering="crispEdges" />
<rect x="389.5" y="46" width="5" height="5" fill="#eaf2fa" stroke="#3a7ad0" stroke-width="1" shape-rendering="crispEdges" />
<rect x="383" y="52.5" width="5" height="5" fill="#eaf2fa" stroke="#3a7ad0" stroke-width="1" shape-rendering="crispEdges" />
<rect x="389.5" y="52.5" width="5" height="5" fill="#eaf2fa" stroke="#3a7ad0" stroke-width="1" shape-rendering="crispEdges" />
<rect x="402" y="47" width="10" height="10" fill="#e8e8e8" stroke="#cccccc" stroke-width="1" shape-rendering="crispEdges" />
<path d="M420 52 h3 M423 49 v6 h5 v-6z M428 52 h2" fill="none" stroke="#666" stroke-width="1" />
<path d="M383 67 h6 M387 65 l2 2 l-2 2" fill="none" stroke="#333" stroke-width="1" />
<rect x="383" y="70" width="3" height="2" fill="#777" shape-rendering="crispEdges" />
<rect x="386" y="70" width="6" height="3" fill="#4a9ae8" shape-rendering="crispEdges" />
<rect x="392.5" y="65" width="2" height="10" fill="#666" shape-rendering="crispEdges" />
<path d="M401 66 h6 M405 64 l2 2 l-2 2" fill="none" stroke="#333" stroke-width="1" />
<rect x="401" y="69" width="3" height="2" fill="#777" shape-rendering="crispEdges" />
<rect x="404" y="69" width="6" height="2" fill="#4a9ae8" shape-rendering="crispEdges" />
<rect x="401" y="72" width="3" height="2" fill="#777" shape-rendering="crispEdges" />
<rect x="404" y="72" width="6" height="2" fill="#4a9ae8" shape-rendering="crispEdges" />
<rect x="410.5" y="64" width="2" height="11" fill="#666" shape-rendering="crispEdges" />
<path d="M421 65 l9 9 M430 65 l-9 9" fill="none" stroke="#e03030" stroke-width="2.2" />
<circle cx="445" cy="33" r="4.5" fill="#d8ecfa" stroke="#3a7cd0"/>
<rect x="443" y="38" width="4" height="3" fill="#555" shape-rendering="crispEdges" />
<path d="M455 34 h4 l-2 2z" fill="#333" />
<rect x="462" y="30" width="10" height="10" fill="#e4e4e4" shape-rendering="crispEdges" />
<path d="M440 58 l9 -10" fill="none" stroke="#c07030" stroke-width="2.5" />
<path d="M455 51 h4 l-2 2z" fill="#333" />
<path d="M463 47 h10 M463 50 h10 M463 53 h10" fill="none" stroke="#333" stroke-width="1" />
<path d="M469 55 l3 3 l3 -3z" fill="#2a6ad0" />
<rect x="441" y="64" width="11" height="8" fill="#9ec6ee" stroke="#333" stroke-width="1" shape-rendering="crispEdges" />
<path d="M489 34 h20" fill="none" stroke="#333" stroke-width="1.4" />
<path d="M489 34 l4 -3 v6z M509 34 l-4 -3 v6z" fill="#333" />
<rect x="489" y="40" width="21" height="5" fill="#f2c94c" stroke="#b08a20" stroke-width="1" shape-rendering="crispEdges" />
<path d="M517 39 h4 l-2 2z" fill="#333" />
<path d="M491 74 l18 -18 M488 71 l6 6 M506 53 l6 6" fill="none" stroke="#333" stroke-width="1.2" />
<path d="M517 64 h4 l-2 2z" fill="#333" />
<path d="M533 29 h-2 v21 h2 M553 29 h2 v21 h-2" fill="none" stroke="#555" stroke-width="1.2" />
<rect x="536" y="31" width="8" height="8" fill="#8ec0f0" stroke="#4a8ad0" stroke-width="1" shape-rendering="crispEdges" />
<rect x="536" y="40" width="8" height="8" fill="#eee" stroke="#666" stroke-width="1" shape-rendering="crispEdges" />
<rect x="544" y="40" width="8" height="8" fill="#eee" stroke="#666" stroke-width="1" shape-rendering="crispEdges" />
<path d="M560 29 h-2 v21 h2 M580 29 h2 v21 h-2" fill="none" stroke="#555" stroke-width="1.2" />
<circle cx="566" cy="36" r="4.5" fill="#eee" stroke="#666"/>
<rect x="566" y="38" width="9" height="9" fill="#eee" stroke="#666" stroke-width="1" shape-rendering="crispEdges" />
<circle cx="577" cy="32" r="2.5" fill="#f5a020"/>
<path d="M532 55 l14 4 v15 l-14 -4z" fill="#f2f2f2" stroke="#bbb" stroke-width="1" />
<path d="M535 53 l14 4 v15" fill="none" stroke="#ccc" stroke-width="1" />
<rect x="559" y="55" width="5" height="5" fill="none" stroke="#555" stroke-width="1" shape-rendering="crispEdges" />
<rect x="575" y="55" width="5" height="5" fill="#9ec6ee" stroke="#3a7cd0" stroke-width="1" shape-rendering="crispEdges" />
<path d="M565 57 h8 M561 62 v6 M566 62 l6 6" fill="none" stroke="#333" stroke-width="1" />
<rect x="559" y="71" width="7" height="5" fill="#9ec6ee" stroke="#3a7cd0" stroke-width="1" shape-rendering="crispEdges" />
<path d="M576 69 l4 3 l-4 3 l-4 -3z" fill="#9ec6ee" stroke="#3a7cd0" stroke-width="1" />
<rect x="594" y="30" width="10" height="13" fill="#f2f2f2" stroke="#555" stroke-width="1" shape-rendering="crispEdges" />
<rect x="604" y="30" width="9" height="13" fill="#e8e8e8" stroke="#555" stroke-width="1" shape-rendering="crispEdges" />
<rect x="594" y="43" width="19" height="4" fill="#f2f2f2" stroke="#555" stroke-width="1" shape-rendering="crispEdges" />
<path d="M607 50 l10 -10" fill="none" stroke="#e0b030" stroke-width="3" />
<text x="597.3" y="64.3" font-size="9.4" fill="#444" color="#444" textLength="15.3" lengthAdjust="spacingAndGlyphs" >Edit</text>
<text x="591.6" y="76.6" font-size="9.4" fill="#444" color="#444" textLength="27.4" lengthAdjust="spacingAndGlyphs" >Family</text>
<rect x="627" y="28" width="80" height="49" fill="#c4ddf3" shape-rendering="crispEdges" />
<rect x="627.5" y="28.5" width="79" height="48" fill="none" stroke="#5b9de2" stroke-width="1" shape-rendering="crispEdges" />
<rect x="655" y="30" width="20" height="14" fill="#f4f4f4" shape-rendering="crispEdges" />
<rect x="655.5" y="30.5" width="19" height="13" fill="none" stroke="#666" stroke-width="1" shape-rendering="crispEdges" />
<rect x="655" y="30" width="20" height="3" fill="#777" shape-rendering="crispEdges" />
<path d="M660 33 v10 M665 33 v10 M655 37 h20" fill="none" stroke="#999" stroke-width="0.8" />
<rect x="665" y="40" width="9" height="11" fill="#e8e8e8" stroke="#555" stroke-width="1" shape-rendering="crispEdges" />
<path d="M666 45 h7 M669.5 41 v9" fill="none" stroke="#555" stroke-width="0.8" />
<path d="M664 36 l3 3 M672 35 l-3 3" fill="none" stroke="#2a7ad0" stroke-width="1.2" />
<path d="M672 34 l-3 4" fill="none" stroke="#e03030" stroke-width="1.2" />
<text x="652.7" y="61.3" font-size="9.4" fill="#444" color="#444" textLength="28.3" lengthAdjust="spacingAndGlyphs" >Create</text>
<text x="632.1" y="74.8" font-size="9.4" fill="#444" color="#444" textLength="68.6" lengthAdjust="spacingAndGlyphs" >Panel Schedules</text>
<path d="M703 68 h3 l-1.5 2z" fill="#333" />
<rect x="710" y="27" width="1" height="64" fill="#dfe6d8" shape-rendering="crispEdges" />
<rect x="732" y="30" width="20" height="14" fill="#f4f4f4" shape-rendering="crispEdges" />
<rect x="732.5" y="30.5" width="19" height="13" fill="none" stroke="#cfcfcf" stroke-width="1" shape-rendering="crispEdges" />
<rect x="732" y="30" width="20" height="3" fill="#d8d8d8" shape-rendering="crispEdges" />
<path d="M737 33 v10 M742 33 v10 M732 37 h20" fill="none" stroke="#dddddd" stroke-width="0.8" />
<rect x="742" y="40" width="9" height="11" fill="#eeeeee" stroke="#cfcfcf" stroke-width="1" shape-rendering="crispEdges" />
<text x="680" y="89" font-size="9.4" fill="#444" color="#444" textLength="42" lengthAdjust="spacingAndGlyphs" >Electrical</text>
<path d="M625.5 26 H708.5 V108 H577.5 V78.5 H625.5 Z" fill="none" stroke="#ee1111" stroke-width="3" />
<rect x="580" y="79" width="126" height="58" fill="#ffffff" shape-rendering="crispEdges" />
<rect x="580.5" y="79.5" width="125" height="57" fill="none" stroke="#a8a8a8" stroke-width="1" shape-rendering="crispEdges" />
<rect x="581" y="80" width="124" height="26" fill="#cfe6f7" shape-rendering="crispEdges" />
<rect x="581.5" y="80.5" width="123" height="25" fill="none" stroke="#7ab3e6" stroke-width="1" shape-rendering="crispEdges" />
<rect x="585" y="83" width="15" height="15" fill="#f0f0f0" shape-rendering="crispEdges" />
<rect x="585.5" y="83.5" width="14" height="14" fill="none" stroke="#666" stroke-width="1" shape-rendering="crispEdges" />
<rect x="585" y="83" width="15" height="3" fill="#777" shape-rendering="crispEdges" />
<path d="M590 86 v12 M595 86 v12 M585 91 h15" fill="none" stroke="#999" stroke-width="0.8" />
<rect x="596" y="93" width="9" height="11" fill="#e8e8e8" stroke="#555" stroke-width="1" shape-rendering="crispEdges" />
<path d="M597 98 h7 M600.5 94 v9" fill="none" stroke="#555" stroke-width="0.8" />
<path d="M595 88 l3 3" fill="none" stroke="#2a7ad0" stroke-width="1.2" />
<path d="M604 87 l-3 4" fill="none" stroke="#e03030" stroke-width="1.2" />
<rect x="585" y="111" width="15" height="15" fill="#f0f0f0" shape-rendering="crispEdges" />
<rect x="585.5" y="111.5" width="14" height="14" fill="none" stroke="#666" stroke-width="1" shape-rendering="crispEdges" />
<rect x="585" y="111" width="15" height="3" fill="#777" shape-rendering="crispEdges" />
<path d="M590 114 v12 M595 114 v12 M585 119 h15" fill="none" stroke="#999" stroke-width="0.8" />
<rect x="596" y="121" width="9" height="11" fill="#e8e8e8" stroke="#555" stroke-width="1" shape-rendering="crispEdges" />
<path d="M597 126 h7 M600.5 122 v9" fill="none" stroke="#555" stroke-width="0.8" />
<path d="M595 116 l3 3" fill="none" stroke="#2a7ad0" stroke-width="1.2" />
<path d="M604 115 l-3 4" fill="none" stroke="#e03030" stroke-width="1.2" />
<circle cx="601" cy="111" r="3.2" fill="none" stroke="#20a020" stroke-width="1.6"/>
<text x="608.9" y="96.7" font-size="9.4" fill="#333" color="#333" textLength="91.8" lengthAdjust="spacingAndGlyphs" >Use Default Template</text>
<text x="608.9" y="124.5" font-size="9.4" fill="#333" color="#333" textLength="82.0" lengthAdjust="spacingAndGlyphs" >Choose a Template</text>
<path d="M577.5 78.5 H708.5 V108 H577.5 Z" fill="none" stroke="#ee1111" stroke-width="3" />
<circle cx="747" cy="78" r="26.5" fill="#8a8a8a"/><circle cx="741" cy="72.2" r="26.8" fill="#000"/>
<text x="743.4" y="83.4" font-size="21.5" fill="#fff" color="#fff" text-anchor="middle" >2</text>
<circle cx="651.5" cy="428.8" r="26.5" fill="#8a8a8a"/><circle cx="645.4" cy="422.8" r="26.5" fill="#000"/>
<text x="644.5" y="434" font-size="21" fill="#fff" color="#fff" font-weight="bold" text-anchor="middle" >1</text>
<rect x="558" y="375" width="51" height="101" fill="none" stroke="#ee1111" stroke-width="3" shape-rendering="crispEdges" />
<text x="795.6" y="20" font-size="9.4" fill="#3c3c3c" color="#3c3c3c" textLength="23.4" lengthAdjust="spacingAndGlyphs" >Insert</text>
<text x="834" y="20" font-size="9.4" fill="#3c3c3c" color="#3c3c3c" textLength="40" lengthAdjust="spacingAndGlyphs" >Annotate</text>
<text x="888.6" y="20" font-size="9.4" fill="#3c3c3c" color="#3c3c3c" textLength="33.4" lengthAdjust="spacingAndGlyphs" >Analyze</text>
<text x="937" y="20" font-size="9.4" fill="#3c3c3c" color="#3c3c3c" textLength="65" lengthAdjust="spacingAndGlyphs" >Massing &amp; Site</text>
<text x="1016.4" y="20" font-size="9.4" fill="#3c3c3c" color="#3c3c3c" textLength="49.6" lengthAdjust="spacingAndGlyphs" >Collaborate</text>
<text x="1081" y="20" font-size="9.4" fill="#3c3c3c" color="#3c3c3c" textLength="20.6" lengthAdjust="spacingAndGlyphs" >View</text>
<text x="1116.4" y="20" font-size="9.4" fill="#3c3c3c" color="#3c3c3c" textLength="35.0" lengthAdjust="spacingAndGlyphs" >Manage</text>
<text x="1166" y="20" font-size="9.4" fill="#3c3c3c" color="#3c3c3c" textLength="34.8" lengthAdjust="spacingAndGlyphs" >Add-Ins</text>
<text x="1215.8" y="20" font-size="9.4" fill="#3c3c3c" color="#3c3c3c" textLength="60.2" lengthAdjust="spacingAndGlyphs" >Quantification</text>
<text x="1291.3" y="20" font-size="9.4" fill="#3c3c3c" color="#3c3c3c" textLength="111.9" lengthAdjust="spacingAndGlyphs" >BIM Interoperability Tools</text>
<text x="1417.7" y="20" font-size="9.4" fill="#3c3c3c" color="#3c3c3c" textLength="30.5" lengthAdjust="spacingAndGlyphs" >Modify</text>
<rect x="1456" y="8" width="112" height="15" fill="#d4e8f4" shape-rendering="crispEdges" />
<text x="1462.7" y="19.5" font-size="9.4" fill="#3c3c3c" color="#3c3c3c" textLength="98.6" lengthAdjust="spacingAndGlyphs" >Modify Panel Schedule</text>
<rect x="795" y="8" width="1" height="15" fill="#cccccc" shape-rendering="crispEdges" />
<defs><clipPath id="clipR"><rect x="795" y="23" width="401" height="53.5"/></clipPath></defs><g clip-path="url(#clipR)">
<text x="795" y="62.5" font-size="9.4" fill="#a6a6a6" color="#a6a6a6" textLength="10.3" lengthAdjust="spacingAndGlyphs" >ve</text>
<text x="811.1" y="62.5" font-size="9.4" fill="#a6a6a6" color="#a6a6a6" textLength="27.7" lengthAdjust="spacingAndGlyphs" >Assign</text>
<text x="813" y="77" font-size="9.4" fill="#a6a6a6" color="#a6a6a6" textLength="23.9" lengthAdjust="spacingAndGlyphs" >Spare</text>
<text x="844" y="62.5" font-size="9.4" fill="#a6a6a6" color="#a6a6a6" textLength="28.1" lengthAdjust="spacingAndGlyphs" >Assign</text>
<text x="845.9" y="77" font-size="9.4" fill="#a6a6a6" color="#a6a6a6" textLength="24.9" lengthAdjust="spacingAndGlyphs" >Space</text>
<text x="885.9" y="62.5" font-size="9.4" fill="#a6a6a6" color="#a6a6a6" textLength="34.8" lengthAdjust="spacingAndGlyphs" >Remove</text>
<text x="876.9" y="77" font-size="9.4" fill="#a6a6a6" color="#a6a6a6" textLength="52.2" lengthAdjust="spacingAndGlyphs" >Spare/Space</text>
<text x="938.4" y="62.5" font-size="9.4" fill="#a6a6a6" color="#a6a6a6" textLength="23.6" lengthAdjust="spacingAndGlyphs" >Lock/</text>
<text x="934.9" y="77" font-size="9.4" fill="#a6a6a6" color="#a6a6a6" textLength="29.0" lengthAdjust="spacingAndGlyphs" >Unlock</text>
<text x="972.9" y="62.5" font-size="9.4" fill="#a6a6a6" color="#a6a6a6" textLength="31.1" lengthAdjust="spacingAndGlyphs" >Group/</text>
<text x="969.1" y="77" font-size="9.4" fill="#a6a6a6" color="#a6a6a6" textLength="34.9" lengthAdjust="spacingAndGlyphs" >Ungroup</text>
<text x="1012.3" y="62.5" font-size="9.4" fill="#a6a6a6" color="#a6a6a6" textLength="32.0" lengthAdjust="spacingAndGlyphs" >Update</text>
<text x="1013.6" y="77" font-size="9.4" fill="#a6a6a6" color="#a6a6a6" textLength="29.8" lengthAdjust="spacingAndGlyphs" >Names</text>
<text x="1056.4" y="62.5" font-size="9.4" fill="#a6a6a6" color="#a6a6a6" textLength="16.6" lengthAdjust="spacingAndGlyphs" >Edit</text>
<text x="1054.7" y="77" font-size="9.4" fill="#a6a6a6" color="#a6a6a6" textLength="19.3" lengthAdjust="spacingAndGlyphs" >Font</text>
<text x="1085.3" y="60.4" font-size="9.4" fill="#a6a6a6" color="#a6a6a6" textLength="51.9" lengthAdjust="spacingAndGlyphs" >Horizontally</text>
<text x="1100.4" y="73.2" font-size="9.4" fill="#a6a6a6" color="#a6a6a6" textLength="21.6" lengthAdjust="spacingAndGlyphs" >Align</text>
<text x="1150.4" y="60.4" font-size="9.4" fill="#a6a6a6" color="#a6a6a6" textLength="38.6" lengthAdjust="spacingAndGlyphs" >Vertically</text>
<text x="1158.9" y="73.2" font-size="9.4" fill="#a6a6a6" color="#a6a6a6" textLength="22.1" lengthAdjust="spacingAndGlyphs" >Align</text>
</g>
<rect x="795" y="76" width="401" height="1" fill="#eeeeee" shape-rendering="crispEdges" />
<rect x="795" y="77" width="786" height="14" fill="#d4e8f4" shape-rendering="crispEdges" />
<rect x="795" y="90" width="786" height="1" fill="#c4d4de" shape-rendering="crispEdges" />
<rect x="1048" y="23" width="1" height="67" fill="#dde8ee" shape-rendering="crispEdges" />
<rect x="1196" y="23" width="1" height="67" fill="#dde8ee" shape-rendering="crispEdges" />
<text x="807.9" y="88.3" font-size="9.4" fill="#404040" color="#404040" textLength="32.0" lengthAdjust="spacingAndGlyphs" >Circuits</text>
<text x="1114" y="88.3" font-size="9.4" fill="#404040" color="#404040" textLength="16.6" lengthAdjust="spacingAndGlyphs" >Text</text>
<path d="M1139 58 h3 l-1.5 2z" fill="#777" />
<path d="M1190 58 h3 l-1.5 2z" fill="#777" />
<path d="M796 28 h6 v6 M798 38 l3 -3 l3 3 l-3 3z" fill="none" stroke="#b4b4b4" stroke-width="1" />
<path d="M814 44 h5 a6 6 0 0 1 12 0 h5" fill="none" stroke="#b4b4b4" stroke-width="1.2" />
<path d="M845 44 h5 a6 6 0 0 1 12 0 h5" fill="none" stroke="#b4b4b4" stroke-width="1.2" />
<path d="M892 46 h5 a6 6 0 0 1 12 0 h5" fill="none" stroke="#b4b4b4" stroke-width="1.2" />
<path d="M906 30 l5 5 M911 30 l-5 5" fill="none" stroke="#b4b4b4" stroke-width="1.5" />
<rect x="941" y="37" width="16" height="12" fill="#eeeeee" shape-rendering="crispEdges" />
<rect x="941.5" y="37.5" width="15" height="11" fill="none" stroke="#b4b4b4" stroke-width="1.2" shape-rendering="crispEdges" />
<path d="M944 37 v-4 a5 5 0 0 1 10 0 v4" fill="none" stroke="#b4b4b4" stroke-width="1.2" />
<rect x="948" y="41" width="2" height="4" fill="#b4b4b4" shape-rendering="crispEdges" />
<path d="M982 28 h-2 v21 h2 M1000 28 h2 v21 h-2" fill="none" stroke="#b4b4b4" stroke-width="1.2" />
<rect x="984" y="31" width="15" height="15" fill="none" stroke="#b4b4b4" stroke-width="1" shape-rendering="crispEdges" />
<path d="M986 37 h11 M986 41 h11" fill="none" stroke="#b4b4b4" stroke-width="0.8" />
<rect x="1017" y="31" width="20" height="12" fill="none" stroke="#b4b4b4" stroke-width="1" shape-rendering="crispEdges" />
<path d="M1021 34 h8" fill="none" stroke="#b4b4b4" stroke-width="1" />
<circle cx="1035" cy="45" r="3.5" fill="none" stroke="#b4b4b4" stroke-width="1.2"/>
<path d="M1055 46 l6 -17 h2 l6 17 M1058 40 h9" fill="none" stroke="#b4b4b4" stroke-width="1.8" />
<path d="M1066 48 l8 -9" fill="none" stroke="#b4b4b4" stroke-width="2" />
<path d="M1103 30 v17" fill="none" stroke="#cfcfcf" stroke-width="1" />
<rect x="1105" y="31" width="13" height="1" fill="#b4b4b4" shape-rendering="crispEdges" />
<rect x="1105" y="34" width="13" height="1" fill="#b4b4b4" shape-rendering="crispEdges" />
<rect x="1105" y="37" width="13" height="1" fill="#b4b4b4" shape-rendering="crispEdges" />
<rect x="1105" y="40" width="13" height="1" fill="#b4b4b4" shape-rendering="crispEdges" />
<rect x="1105" y="43" width="13" height="1" fill="#b4b4b4" shape-rendering="crispEdges" />
<rect x="1105" y="46" width="13" height="1" fill="#b4b4b4" shape-rendering="crispEdges" />
<rect x="1158" y="29" width="20" height="1" fill="#cfcfcf" shape-rendering="crispEdges" />
<rect x="1158" y="46" width="20" height="1" fill="#cfcfcf" shape-rendering="crispEdges" />
<rect x="1162" y="32" width="12" height="1" fill="#b4b4b4" shape-rendering="crispEdges" />
<rect x="1160" y="35" width="16" height="1" fill="#b4b4b4" shape-rendering="crispEdges" />
<rect x="1162" y="38" width="12" height="1" fill="#b4b4b4" shape-rendering="crispEdges" />
<rect x="1160" y="41" width="16" height="1" fill="#b4b4b4" shape-rendering="crispEdges" />
<rect x="1162" y="44" width="12" height="1" fill="#b4b4b4" shape-rendering="crispEdges" />
<rect x="1246" y="0" width="1" height="6" fill="rgba(90,110,130,0.07)" shape-rendering="crispEdges" />
<rect x="1246" y="8" width="1" height="118" fill="rgba(90,110,130,0.06)" shape-rendering="crispEdges" />
<rect x="1246" y="184" width="344" height="1" fill="rgba(90,110,130,0.06)" shape-rendering="crispEdges" />
<rect x="1246" y="128" width="1" height="56" fill="rgba(90,110,130,0.06)" shape-rendering="crispEdges" />
<rect x="797" y="113" width="9" height="11" fill="none" stroke="#9a9a9a" stroke-width="1" shape-rendering="crispEdges" />
<rect x="800" y="116" width="5" height="5" fill="none" stroke="#9a9a9a" stroke-width="1" shape-rendering="crispEdges" />
<text x="813.6" y="122" font-size="9.4" fill="#555" color="#555" textLength="51.5" lengthAdjust="spacingAndGlyphs" >ระดับพื้นชั้น 4</text>
<rect x="884" y="111" width="176" height="16" fill="#ffffff" shape-rendering="crispEdges" />
<rect x="888" y="113" width="12" height="11" fill="#f4f4f4" shape-rendering="crispEdges" />
<rect x="888.5" y="113.5" width="11" height="10" fill="none" stroke="#7a7a7a" stroke-width="1" shape-rendering="crispEdges" />
<rect x="888" y="113" width="12" height="2" fill="#8a8a8a" shape-rendering="crispEdges" />
<path d="M892 115 v8 M896 115 v8 M888 118 h12" fill="none" stroke="#aaa" stroke-width="0.8" />
<rect x="895" y="118" width="6" height="7" fill="#dcdcdc" stroke="#6a6a6a" stroke-width="0.8" shape-rendering="crispEdges" />
<path d="M894 116 l2 2" fill="none" stroke="#4a8ad0" stroke-width="1" />
<path d="M900 115 l-2 2" fill="none" stroke="#d04040" stroke-width="1" />
<text x="905" y="122" font-size="9.6" fill="#222" color="#222" font-weight="bold" textLength="137.4" lengthAdjust="spacingAndGlyphs" >24 CT, 220 V/380 V, Three P...</text>
<path d="M1050 115 l7 7 M1057 115 l-7 7" fill="none" stroke="#333" stroke-width="1.2" />
<path d="M1566 120 h7 M1566 122 l3.5 3 l3.5 -3z" fill="#555" stroke="#555" stroke-width="0.6" />
<defs><clipPath id="clipS"><rect x="795" y="127" width="770" height="573"/></clipPath></defs><g clip-path="url(#clipS)">
<text x="850.8" y="146.7" font-size="16.7" fill="#000" color="#000" font-weight="bold" textLength="168.1" lengthAdjust="spacingAndGlyphs" >Branch Panel: LP-4-1</text>
<text x="963.9" y="161.9" font-size="8.3" fill="#111" color="#111" font-weight="bold" text-anchor="end" >Location:</text>
<text x="967.4" y="161.9" font-size="8.5" fill="#333" color="#333" >ELE RM. 20</text>
<text x="963.9" y="174.6" font-size="8.3" fill="#111" color="#111" font-weight="bold" text-anchor="end" >Supply From:</text>
<text x="963.9" y="187.7" font-size="8.3" fill="#111" color="#111" font-weight="bold" text-anchor="end" >Mounting:</text>
<text x="967.4" y="187.7" font-size="8.5" fill="#333" color="#333" >Recessed</text>
<text x="963.9" y="200.5" font-size="8.3" fill="#111" color="#111" font-weight="bold" text-anchor="end" >Enclosure:</text>
<text x="967.4" y="200.5" font-size="8.5" fill="#333" color="#333" >Type 1</text>
<text x="1203.7" y="161.9" font-size="8.3" fill="#111" color="#111" font-weight="bold" text-anchor="end" >Volts:</text>
<text x="1207.8" y="161.9" font-size="8.5" fill="#333" color="#333" >380/220 Wye</text>
<text x="1203.7" y="174.6" font-size="8.3" fill="#111" color="#111" font-weight="bold" text-anchor="end" >Phases:</text>
<text x="1207.8" y="174.6" font-size="8.5" fill="#333" color="#333" >3</text>
<text x="1203.7" y="187.7" font-size="8.3" fill="#111" color="#111" font-weight="bold" text-anchor="end" >Wires:</text>
<text x="1207.8" y="187.7" font-size="8.5" fill="#333" color="#333" >4</text>
<text x="1444.1" y="161.9" font-size="8.3" fill="#111" color="#111" font-weight="bold" text-anchor="end" >A.I.C. Rating:</text>
<text x="1444.1" y="174.6" font-size="8.3" fill="#111" color="#111" font-weight="bold" text-anchor="end" >Mains Type:</text>
<text x="1444.1" y="187.7" font-size="8.3" fill="#111" color="#111" font-weight="bold" text-anchor="end" >Mains Rating:</text>
<text x="1447.7" y="187.7" font-size="8.5" fill="#333" color="#333" >250 A</text>
<text x="1444.1" y="200.5" font-size="8.3" fill="#111" color="#111" font-weight="bold" text-anchor="end" >MCB Rating:</text>
<text x="1447.7" y="200.5" font-size="8.5" fill="#333" color="#333" >1 A</text>
<text x="797" y="226" font-size="8.3" fill="#111" color="#111" font-weight="bold" >Notes:</text>
<rect x="1173" y="295" width="67" height="13" fill="#d6d6d6" shape-rendering="crispEdges" />
<rect x="1241" y="295" width="68" height="13" fill="#d6d6d6" shape-rendering="crispEdges" />
<rect x="1104" y="308" width="68" height="13" fill="#d6d6d6" shape-rendering="crispEdges" />
<rect x="1241" y="308" width="68" height="13" fill="#d6d6d6" shape-rendering="crispEdges" />
<rect x="1104" y="321" width="68" height="13" fill="#d6d6d6" shape-rendering="crispEdges" />
<rect x="1173" y="321" width="67" height="13" fill="#d6d6d6" shape-rendering="crispEdges" />
<rect x="1173" y="334" width="67" height="13" fill="#d6d6d6" shape-rendering="crispEdges" />
<rect x="1241" y="334" width="68" height="13" fill="#d6d6d6" shape-rendering="crispEdges" />
<rect x="1104" y="347" width="68" height="13" fill="#d6d6d6" shape-rendering="crispEdges" />
<rect x="1241" y="347" width="68" height="13" fill="#d6d6d6" shape-rendering="crispEdges" />
<rect x="1104" y="360" width="68" height="13" fill="#d6d6d6" shape-rendering="crispEdges" />
<rect x="1173" y="360" width="67" height="13" fill="#d6d6d6" shape-rendering="crispEdges" />
<rect x="1173" y="373" width="67" height="13" fill="#d6d6d6" shape-rendering="crispEdges" />
<rect x="1241" y="373" width="68" height="13" fill="#d6d6d6" shape-rendering="crispEdges" />
<rect x="1104" y="386" width="68" height="13" fill="#d6d6d6" shape-rendering="crispEdges" />
<rect x="1241" y="386" width="68" height="13" fill="#d6d6d6" shape-rendering="crispEdges" />
<rect x="1104" y="399" width="68" height="13" fill="#d6d6d6" shape-rendering="crispEdges" />
<rect x="1173" y="399" width="67" height="13" fill="#d6d6d6" shape-rendering="crispEdges" />
<rect x="1173" y="412" width="67" height="13" fill="#d6d6d6" shape-rendering="crispEdges" />
<rect x="1241" y="412" width="68" height="13" fill="#d6d6d6" shape-rendering="crispEdges" />
<rect x="1104" y="425" width="68" height="13" fill="#d6d6d6" shape-rendering="crispEdges" />
<rect x="1241" y="425" width="68" height="13" fill="#d6d6d6" shape-rendering="crispEdges" />
<rect x="1104" y="438" width="68" height="12" fill="#d6d6d6" shape-rendering="crispEdges" />
<rect x="1173" y="438" width="67" height="12" fill="#d6d6d6" shape-rendering="crispEdges" />
<rect x="1173" y="450" width="67" height="13" fill="#d6d6d6" shape-rendering="crispEdges" />
<rect x="1241" y="450" width="68" height="13" fill="#d6d6d6" shape-rendering="crispEdges" />
<rect x="1104" y="463" width="68" height="13" fill="#d6d6d6" shape-rendering="crispEdges" />
<rect x="1241" y="463" width="68" height="13" fill="#d6d6d6" shape-rendering="crispEdges" />
<rect x="1104" y="476" width="68" height="13" fill="#d6d6d6" shape-rendering="crispEdges" />
<rect x="1173" y="476" width="67" height="13" fill="#d6d6d6" shape-rendering="crispEdges" />
<rect x="1173" y="489" width="67" height="13" fill="#d6d6d6" shape-rendering="crispEdges" />
<rect x="1241" y="489" width="68" height="13" fill="#d6d6d6" shape-rendering="crispEdges" />
<rect x="1104" y="502" width="68" height="13" fill="#d6d6d6" shape-rendering="crispEdges" />
<rect x="1241" y="502" width="68" height="13" fill="#d6d6d6" shape-rendering="crispEdges" />
<rect x="1104" y="515" width="68" height="13" fill="#d6d6d6" shape-rendering="crispEdges" />
<rect x="1173" y="515" width="67" height="13" fill="#d6d6d6" shape-rendering="crispEdges" />
<rect x="1173" y="528" width="67" height="13" fill="#d6d6d6" shape-rendering="crispEdges" />
<rect x="1241" y="528" width="68" height="13" fill="#d6d6d6" shape-rendering="crispEdges" />
<rect x="1104" y="541" width="68" height="13" fill="#d6d6d6" shape-rendering="crispEdges" />
<rect x="1241" y="541" width="68" height="13" fill="#d6d6d6" shape-rendering="crispEdges" />
<rect x="1104" y="554" width="68" height="13" fill="#d6d6d6" shape-rendering="crispEdges" />
<rect x="1173" y="554" width="67" height="13" fill="#d6d6d6" shape-rendering="crispEdges" />
<line x1="795" y1="257.5" x2="1564" y2="257.5" stroke="#3a3a3a" stroke-width="1" shape-rendering="crispEdges" />
<line x1="795" y1="295.5" x2="1564" y2="295.5" stroke="#3a3a3a" stroke-width="1" shape-rendering="crispEdges" />
<line x1="795" y1="308.5" x2="1564" y2="308.5" stroke="#3a3a3a" stroke-width="1" shape-rendering="crispEdges" />
<line x1="795" y1="321.5" x2="1564" y2="321.5" stroke="#3a3a3a" stroke-width="1" shape-rendering="crispEdges" />
<line x1="795" y1="334.5" x2="1564" y2="334.5" stroke="#3a3a3a" stroke-width="1" shape-rendering="crispEdges" />
<line x1="795" y1="347.5" x2="1564" y2="347.5" stroke="#3a3a3a" stroke-width="1" shape-rendering="crispEdges" />
<line x1="795" y1="360.5" x2="1564" y2="360.5" stroke="#3a3a3a" stroke-width="1" shape-rendering="crispEdges" />
<line x1="795" y1="373.5" x2="1564" y2="373.5" stroke="#3a3a3a" stroke-width="1" shape-rendering="crispEdges" />
<line x1="795" y1="386.5" x2="1564" y2="386.5" stroke="#3a3a3a" stroke-width="1" shape-rendering="crispEdges" />
<line x1="795" y1="399.5" x2="1564" y2="399.5" stroke="#3a3a3a" stroke-width="1" shape-rendering="crispEdges" />
<line x1="795" y1="412.5" x2="1564" y2="412.5" stroke="#3a3a3a" stroke-width="1" shape-rendering="crispEdges" />
<line x1="795" y1="425.5" x2="1564" y2="425.5" stroke="#3a3a3a" stroke-width="1" shape-rendering="crispEdges" />
<line x1="795" y1="438.5" x2="1564" y2="438.5" stroke="#3a3a3a" stroke-width="1" shape-rendering="crispEdges" />
<line x1="795" y1="450.5" x2="1564" y2="450.5" stroke="#3a3a3a" stroke-width="1" shape-rendering="crispEdges" />
<line x1="795" y1="463.5" x2="1564" y2="463.5" stroke="#3a3a3a" stroke-width="1" shape-rendering="crispEdges" />
<line x1="795" y1="476.5" x2="1564" y2="476.5" stroke="#3a3a3a" stroke-width="1" shape-rendering="crispEdges" />
<line x1="795" y1="489.5" x2="1564" y2="489.5" stroke="#3a3a3a" stroke-width="1" shape-rendering="crispEdges" />
<line x1="795" y1="502.5" x2="1564" y2="502.5" stroke="#3a3a3a" stroke-width="1" shape-rendering="crispEdges" />
<line x1="795" y1="515.5" x2="1564" y2="515.5" stroke="#3a3a3a" stroke-width="1" shape-rendering="crispEdges" />
<line x1="795" y1="528.5" x2="1564" y2="528.5" stroke="#3a3a3a" stroke-width="1" shape-rendering="crispEdges" />
<line x1="795" y1="541.5" x2="1564" y2="541.5" stroke="#3a3a3a" stroke-width="1" shape-rendering="crispEdges" />
<line x1="795" y1="554.5" x2="1564" y2="554.5" stroke="#3a3a3a" stroke-width="1" shape-rendering="crispEdges" />
<line x1="795" y1="567.5" x2="1564" y2="567.5" stroke="#3a3a3a" stroke-width="1" shape-rendering="crispEdges" />
<rect x="828" y="257" width="2" height="310" fill="#3a3a3a" shape-rendering="crispEdges" />
<line x1="1034.5" y1="257" x2="1034.5" y2="567" stroke="#3a3a3a" stroke-width="1" shape-rendering="crispEdges" />
<line x1="1069.5" y1="257" x2="1069.5" y2="567" stroke="#3a3a3a" stroke-width="1" shape-rendering="crispEdges" />
<line x1="1103.5" y1="257" x2="1103.5" y2="567" stroke="#3a3a3a" stroke-width="1" shape-rendering="crispEdges" />
<line x1="1138.5" y1="295" x2="1138.5" y2="567" stroke="#3a3a3a" stroke-width="1" shape-rendering="crispEdges" />
<line x1="1172.5" y1="257" x2="1172.5" y2="567" stroke="#3a3a3a" stroke-width="1" shape-rendering="crispEdges" />
<line x1="1206.5" y1="295" x2="1206.5" y2="567" stroke="#3a3a3a" stroke-width="1" shape-rendering="crispEdges" />
<line x1="1240.5" y1="257" x2="1240.5" y2="567" stroke="#3a3a3a" stroke-width="1" shape-rendering="crispEdges" />
<line x1="1275.5" y1="295" x2="1275.5" y2="567" stroke="#3a3a3a" stroke-width="1" shape-rendering="crispEdges" />
<line x1="1309.5" y1="257" x2="1309.5" y2="567" stroke="#3a3a3a" stroke-width="1" shape-rendering="crispEdges" />
<line x1="1343.5" y1="257" x2="1343.5" y2="567" stroke="#3a3a3a" stroke-width="1" shape-rendering="crispEdges" />
<rect x="1377" y="257" width="2" height="310" fill="#3a3a3a" shape-rendering="crispEdges" />
<text x="811.8" y="291.9" font-size="8.3" fill="#111" color="#111" font-weight="bold" text-anchor="middle" >CKT</text>
<text x="931.7" y="291.9" font-size="8.3" fill="#111" color="#111" font-weight="bold" text-anchor="middle" >Circuit Description</text>
<text x="1052" y="291.9" font-size="8.3" fill="#111" color="#111" font-weight="bold" text-anchor="middle" >Trip</text>
<text x="1086.5" y="291.9" font-size="8.3" fill="#111" color="#111" font-weight="bold" text-anchor="middle" >Poles</text>
<text x="1138.2" y="291.9" font-size="8.3" fill="#111" color="#111" font-weight="bold" text-anchor="middle" >A</text>
<text x="1206.8" y="291.9" font-size="8.3" fill="#111" color="#111" font-weight="bold" text-anchor="middle" >B</text>
<text x="1275.2" y="291.9" font-size="8.3" fill="#111" color="#111" font-weight="bold" text-anchor="middle" >C</text>
<text x="1326.5" y="291.9" font-size="8.3" fill="#111" color="#111" font-weight="bold" text-anchor="middle" >Poles</text>
<text x="1360.7" y="291.9" font-size="8.3" fill="#111" color="#111" font-weight="bold" text-anchor="middle" >Trip</text>
<text x="1480.6" y="291.9" font-size="8.3" fill="#111" color="#111" font-weight="bold" text-anchor="middle" >Circuit Description</text>
<text x="811.8" y="303.7" font-size="8.5" fill="#222" color="#222" text-anchor="middle" >1</text>
<text x="811.8" y="316.7" font-size="8.5" fill="#222" color="#222" text-anchor="middle" >3</text>
<text x="811.8" y="329.7" font-size="8.5" fill="#222" color="#222" text-anchor="middle" >5</text>
<text x="811.8" y="342.7" font-size="8.5" fill="#222" color="#222" text-anchor="middle" >7</text>
<text x="811.8" y="355.7" font-size="8.5" fill="#222" color="#222" text-anchor="middle" >9</text>
<text x="811.8" y="368.7" font-size="8.5" fill="#222" color="#222" text-anchor="middle" >11</text>
<text x="811.8" y="381.7" font-size="8.5" fill="#222" color="#222" text-anchor="middle" >13</text>
<text x="811.8" y="394.7" font-size="8.5" fill="#222" color="#222" text-anchor="middle" >15</text>
<text x="811.8" y="407.7" font-size="8.5" fill="#222" color="#222" text-anchor="middle" >17</text>
<text x="811.8" y="420.7" font-size="8.5" fill="#222" color="#222" text-anchor="middle" >19</text>
<text x="811.8" y="433.7" font-size="8.5" fill="#222" color="#222" text-anchor="middle" >21</text>
<text x="811.8" y="446.7" font-size="8.5" fill="#222" color="#222" text-anchor="middle" >23</text>
<text x="811.8" y="458.7" font-size="8.5" fill="#222" color="#222" text-anchor="middle" >25</text>
<text x="811.8" y="471.7" font-size="8.5" fill="#222" color="#222" text-anchor="middle" >27</text>
<text x="811.8" y="484.7" font-size="8.5" fill="#222" color="#222" text-anchor="middle" >29</text>
<text x="811.8" y="497.7" font-size="8.5" fill="#222" color="#222" text-anchor="middle" >31</text>
<text x="811.8" y="510.7" font-size="8.5" fill="#222" color="#222" text-anchor="middle" >33</text>
<text x="811.8" y="523.7" font-size="8.5" fill="#222" color="#222" text-anchor="middle" >35</text>
<text x="811.8" y="536.7" font-size="8.5" fill="#222" color="#222" text-anchor="middle" >37</text>
<text x="811.8" y="549.7" font-size="8.5" fill="#222" color="#222" text-anchor="middle" >39</text>
<text x="811.8" y="562.7" font-size="8.5" fill="#222" color="#222" text-anchor="middle" >41</text>
<text x="830.9" y="303.7" font-size="8.9" fill="#222" color="#222" textLength="91.4" lengthAdjust="spacingAndGlyphs" >Lighting - Dwelling Unit</text>
<text x="1052" y="303.7" font-size="8.5" fill="#222" color="#222" text-anchor="middle" >20 A</text>
<text x="1086.5" y="303.7" font-size="8.5" fill="#222" color="#222" text-anchor="middle" >1</text>
<text x="830.9" y="316.7" font-size="8.9" fill="#222" color="#222" textLength="91.4" lengthAdjust="spacingAndGlyphs" >Lighting - Dwelling Unit</text>
<text x="1052" y="316.7" font-size="8.5" fill="#222" color="#222" text-anchor="middle" >20 A</text>
<text x="1086.5" y="316.7" font-size="8.5" fill="#222" color="#222" text-anchor="middle" >1</text>
<text x="830.9" y="329.7" font-size="8.9" fill="#222" color="#222" textLength="91.4" lengthAdjust="spacingAndGlyphs" >Lighting - Dwelling Unit</text>
<text x="1052" y="329.7" font-size="8.5" fill="#222" color="#222" text-anchor="middle" >20 A</text>
<text x="1086.5" y="329.7" font-size="8.5" fill="#222" color="#222" text-anchor="middle" >1</text>
<text x="1379.8" y="303.7" font-size="8.9" fill="#222" color="#222" textLength="91.4" lengthAdjust="spacingAndGlyphs" >Lighting - Dwelling Unit</text>
<text x="1360.7" y="303.7" font-size="8.5" fill="#222" color="#222" text-anchor="middle" >20 A</text>
<text x="1326.5" y="303.7" font-size="8.5" fill="#222" color="#222" text-anchor="middle" >1</text>
<text x="1379.8" y="316.7" font-size="8.9" fill="#222" color="#222" textLength="91.4" lengthAdjust="spacingAndGlyphs" >Lighting - Dwelling Unit</text>
<text x="1360.7" y="316.7" font-size="8.5" fill="#222" color="#222" text-anchor="middle" >20 A</text>
<text x="1326.5" y="316.7" font-size="8.5" fill="#222" color="#222" text-anchor="middle" >1</text>
<text x="1121" y="303.7" font-size="8.5" fill="#222" color="#222" text-anchor="middle" >192 VA</text>
<text x="1155.2" y="303.7" font-size="8.5" fill="#222" color="#222" text-anchor="middle" >576 VA</text>
<text x="1189.5" y="316.7" font-size="8.5" fill="#222" color="#222" text-anchor="middle" >384 VA</text>
<text x="1223.8" y="316.7" font-size="8.5" fill="#222" color="#222" text-anchor="middle" >384 VA</text>
<text x="1258" y="329.7" font-size="8.5" fill="#222" color="#222" text-anchor="middle" >576 VA</text>
<text x="1101.3" y="576" font-size="8.3" fill="#111" color="#111" font-weight="bold" text-anchor="end" >Total Load:</text>
<text x="1101.3" y="588.7" font-size="8.3" fill="#111" color="#111" font-weight="bold" text-anchor="end" >Total Amps:</text>
<rect x="1103.5" y="566.5" width="206" height="12.7" fill="none" stroke="#3a3a3a" stroke-width="1" shape-rendering="crispEdges" />
<line x1="1172.5" y1="567" x2="1172.5" y2="579" stroke="#3a3a3a" stroke-width="1" shape-rendering="crispEdges" />
<line x1="1240.5" y1="567" x2="1240.5" y2="579" stroke="#3a3a3a" stroke-width="1" shape-rendering="crispEdges" />
<text x="1138.2" y="576" font-size="8.5" fill="#222" color="#222" text-anchor="middle" >768 VA</text>
<text x="1138.2" y="588.7" font-size="8.5" fill="#222" color="#222" text-anchor="middle" >4 A</text>
<text x="1206.8" y="576" font-size="8.5" fill="#222" color="#222" text-anchor="middle" >768 VA</text>
<text x="1206.8" y="588.7" font-size="8.5" fill="#222" color="#222" text-anchor="middle" >4 A</text>
<text x="1275.2" y="576" font-size="8.5" fill="#222" color="#222" text-anchor="middle" >576 VA</text>
<text x="1275.2" y="588.7" font-size="8.5" fill="#222" color="#222" text-anchor="middle" >3 A</text>
<line x1="795" y1="592.5" x2="1564" y2="592.5" stroke="#3a3a3a" stroke-width="1" shape-rendering="crispEdges" />
<text x="796.8" y="601.8" font-size="8.3" fill="#111" color="#111" font-weight="bold" >Legend:</text>
<line x1="795" y1="632.5" x2="1564" y2="632.5" stroke="#3a3a3a" stroke-width="1" shape-rendering="crispEdges" />
<line x1="795" y1="644.5" x2="1564" y2="644.5" stroke="#3a3a3a" stroke-width="1" shape-rendering="crispEdges" />
<line x1="795" y1="657.5" x2="1564" y2="657.5" stroke="#3a3a3a" stroke-width="1" shape-rendering="crispEdges" />
<line x1="795" y1="670.5" x2="1564" y2="670.5" stroke="#3a3a3a" stroke-width="1" shape-rendering="crispEdges" />
<line x1="795" y1="683.5" x2="1564" y2="683.5" stroke="#3a3a3a" stroke-width="1" shape-rendering="crispEdges" />
<line x1="795" y1="696.5" x2="1564" y2="696.5" stroke="#3a3a3a" stroke-width="1" shape-rendering="crispEdges" />
<line x1="1035.5" y1="632" x2="1035.5" y2="705" stroke="#3a3a3a" stroke-width="1" shape-rendering="crispEdges" />
<line x1="1138.5" y1="632" x2="1138.5" y2="705" stroke="#3a3a3a" stroke-width="1" shape-rendering="crispEdges" />
<line x1="1241.5" y1="632" x2="1241.5" y2="705" stroke="#3a3a3a" stroke-width="1" shape-rendering="crispEdges" />
<line x1="1343.5" y1="632" x2="1343.5" y2="705" stroke="#3a3a3a" stroke-width="1" shape-rendering="crispEdges" />
<line x1="1480.5" y1="644" x2="1480.5" y2="705" stroke="#3a3a3a" stroke-width="1" shape-rendering="crispEdges" />
<text x="797" y="640.6" font-size="8.3" fill="#111" color="#111" font-weight="bold" >Load Classification</text>
<text x="1086" y="640.6" font-size="8.3" fill="#111" color="#111" font-weight="bold" text-anchor="middle" >Connected Load</text>
<text x="1189" y="640.6" font-size="8.3" fill="#111" color="#111" font-weight="bold" text-anchor="middle" >Demand Factor</text>
<text x="1292" y="640.6" font-size="8.3" fill="#111" color="#111" font-weight="bold" text-anchor="middle" >Estimated Demand</text>
<text x="1480.3" y="640.6" font-size="8.3" fill="#111" color="#111" font-weight="bold" text-anchor="middle" >Panel Totals</text>
<text x="797" y="653.5" font-size="8.9" fill="#222" color="#222" textLength="90" lengthAdjust="spacingAndGlyphs" >Lighting - Dwelling Unit</text>
<text x="1086" y="653.5" font-size="8.5" fill="#222" color="#222" text-anchor="middle" >2112 VA</text>
<text x="1189" y="653.5" font-size="8.5" fill="#222" color="#222" text-anchor="middle" >100.00%</text>
<text x="1292" y="653.5" font-size="8.5" fill="#222" color="#222" text-anchor="middle" >2112 VA</text>
<text x="1478.4" y="666.4" font-size="8.3" fill="#111" color="#111" font-weight="bold" text-anchor="end" >Total Conn. Load:</text>
<text x="1482" y="666.4" font-size="8.5" fill="#333" color="#333" >2112 VA</text>
<text x="1478.4" y="679.2" font-size="8.3" fill="#111" color="#111" font-weight="bold" text-anchor="end" >Total Est. Demand:</text>
<text x="1482" y="679.2" font-size="8.5" fill="#333" color="#333" >2112 VA</text>
<text x="1478.4" y="692" font-size="8.3" fill="#111" color="#111" font-weight="bold" text-anchor="end" >Total Conn.:</text>
<text x="1482" y="692" font-size="8.5" fill="#333" color="#333" >3 A</text>
<text x="1478.4" y="704.8" font-size="8.3" fill="#111" color="#111" font-weight="bold" text-anchor="end" >Total Est. Demand:</text>
<text x="1482" y="704.8" font-size="8.5" fill="#333" color="#333" >3 A</text>
</g>
<rect x="1565" y="127" width="11" height="573" fill="#efefef" shape-rendering="crispEdges" />
<rect x="1565" y="140" width="11" height="469" fill="#c8c8c8" shape-rendering="crispEdges" />
<path d="M1567 136 l3.5 -3 l3.5 3" fill="none" stroke="#444" stroke-width="1" />
<path d="M1567 692 l3.5 3 l3.5 -3" fill="none" stroke="#444" stroke-width="1" />
<rect x="1576" y="127" width="5" height="586" fill="#ffffff" shape-rendering="crispEdges" />
<rect x="795" y="700" width="770" height="12" fill="#efefef" shape-rendering="crispEdges" />
<rect x="807" y="701" width="696" height="10" fill="#c8c8c8" shape-rendering="crispEdges" />
<rect x="1314" y="708" width="8" height="2" fill="#3aa0e0" shape-rendering="crispEdges" />
<path d="M802 703 l-3 3 l3 3" fill="none" stroke="#444" stroke-width="1.2" />
<path d="M1556 703 l3 3 l-3 3" fill="none" stroke="#444" stroke-width="1.2" />
<rect x="795" y="713" width="786" height="18" fill="#d2d2d2" shape-rendering="crispEdges" />
<text x="795" y="726.8" font-size="9.6" fill="#222" color="#222" textLength="224" lengthAdjust="spacingAndGlyphs" >et to the original zoom level (100%), press Ctrl + 0.</text>
<circle cx="1101" cy="719" r="3" fill="none" stroke="#2a9a4a" stroke-width="1"/>
<rect x="1096" y="721" width="5" height="7" fill="none" stroke="#2b6ac4" stroke-width="1" shape-rendering="crispEdges" />
<rect x="1102" y="721" width="5" height="7" fill="none" stroke="#2b6ac4" stroke-width="1" shape-rendering="crispEdges" />
<rect x="1111" y="716" width="145" height="14" fill="#ffffff" shape-rendering="crispEdges" />
<path d="M1246 721 l3 3 l3 -3" fill="none" stroke="#aaa" stroke-width="1" />
<path d="M1265 727 l5 -8 a3 3 0 1 1 3 3" fill="none" stroke="#aaa" stroke-width="1.5" />
<text x="1278" y="727" font-size="9.4" fill="#444" color="#444" >:0</text>
<rect x="1303" y="718" width="11" height="11" fill="none" stroke="#555" stroke-width="1" shape-rendering="crispEdges" />
<rect x="1305" y="720" width="7" height="2" fill="#555" shape-rendering="crispEdges" />
<path d="M1306 724 h5 M1306 727 h5" fill="none" stroke="#555" stroke-width="0.8" />
<rect x="1321" y="718" width="11" height="11" fill="#c0c0c0" shape-rendering="crispEdges" />
<rect x="1337" y="717" width="146" height="13" fill="#f2f2f2" shape-rendering="crispEdges" />
<text x="1338.6" y="727.5" font-size="10.5" fill="#9a9a9a" color="#9a9a9a" textLength="59.3" lengthAdjust="spacingAndGlyphs" >Main Model</text>
<path d="M1471 721 l3 3 l3 -3" fill="none" stroke="#aaa" stroke-width="1" />
<rect x="783" y="672" width="10" height="2" fill="#17703c" shape-rendering="crispEdges" />
<rect x="783" y="687" width="10" height="2" fill="#17703c" shape-rendering="crispEdges" />
<path d="M1251.1 673.9 L1249.1 672.3 L1247.4 670.4 L1246.0 668.1 L1244.9 665.7 L1244.2 663.1 L1244.0 660.4 L1244.1 657.6 L1244.7 654.9 L1245.7 652.3 L1247.1 649.9 L1248.8 647.7 L1250.9 645.7 L1253.3 644.2 L1256.0 643.1 L1258.7 642.4 L1261.6 642.1 L1264.4 642.3 L1267.2 642.8 L1269.9 643.8 L1272.4 645.2 L1274.6 647.0 L1276.6 649.0 L1278.3 651.4 L1279.5 653.9 L1280.4 656.6 L1280.8 659.5 L1280.9 662.3 L1280.4 665.1 L1279.6 667.9 L1278.4 670.5 L1274.9 673.4 L1274.2 668.0 L1275.1 666.1 L1275.8 664.1 L1276.1 662.0 L1276.1 659.9 L1275.7 657.7 L1275.1 655.7 L1274.1 653.8 L1272.9 652.1 L1271.4 650.5 L1269.7 649.2 L1267.9 648.2 L1265.9 647.4 L1263.8 647.0 L1261.7 646.9 L1259.6 647.1 L1257.5 647.6 L1255.5 648.5 L1253.7 649.6 L1252.0 650.9 L1250.5 652.4 L1249.2 654.2 L1248.2 656.1 L1247.5 658.3 L1247.1 660.5 L1247.0 662.8 L1247.3 665.0 L1247.9 667.3 L1248.8 669.4 L1250.1 671.5 L1251.7 673.3Z" fill="#17703c" />
<path d="M1229.0 664.0 L1227.0 666.0 L1225.4 668.3 L1224.2 671.0 L1223.4 673.8 L1223.1 676.7 L1223.3 679.6 L1224.0 682.5 L1225.2 685.3 L1226.8 687.9 L1228.9 690.1 L1231.3 692.0 L1234.0 693.5 L1237.0 694.5 L1240.0 694.9 L1243.1 694.8 L1246.2 694.2 L1249.1 693.1 L1251.8 691.5 L1254.2 689.5 L1256.2 687.2 L1257.9 684.6 L1259.0 681.7 L1259.7 678.6 L1259.9 675.5 L1259.6 672.4 L1258.7 669.5 L1257.4 666.6 L1255.7 664.1 L1253.5 661.8 L1251.0 660.0 L1246.5 659.0 L1248.5 664.0 L1250.3 665.4 L1251.9 667.1 L1253.2 669.0 L1254.2 671.1 L1254.8 673.3 L1255.1 675.7 L1255.0 678.0 L1254.4 680.2 L1253.6 682.4 L1252.4 684.4 L1250.8 686.1 L1249.0 687.6 L1247.0 688.7 L1244.9 689.6 L1242.6 690.0 L1240.3 690.1 L1238.0 689.8 L1235.8 689.1 L1233.6 688.2 L1231.6 686.9 L1229.9 685.3 L1228.4 683.4 L1227.2 681.3 L1226.4 679.0 L1225.9 676.6 L1225.9 674.1 L1226.2 671.6 L1227.0 669.1 L1228.1 666.8 L1229.6 664.6Z" fill="#17703c" />
<path d="M1265.4 670.8 L1265.9 668.7 L1266.8 666.8 L1267.9 664.9 L1269.2 663.2 L1270.8 661.6 L1272.6 660.3 L1274.5 659.2 L1276.6 658.3 L1278.8 657.7 L1281.1 657.4 L1283.4 657.3 L1285.7 657.6 L1287.9 658.2 L1290.1 659.2 L1292.1 660.3 L1293.9 661.8 L1295.6 663.4 L1297.0 665.2 L1298.2 667.2 L1299.2 669.3 L1299.9 671.6 L1300.3 673.8 L1300.4 676.2 L1300.2 678.5 L1299.8 680.8 L1299.1 683.0 L1298.1 685.1 L1296.8 687.1 L1295.3 688.9 L1293.6 690.5 L1289.3 692.1 L1290.6 686.8 L1291.8 685.6 L1292.9 684.3 L1293.9 682.8 L1294.6 681.2 L1295.1 679.6 L1295.5 677.9 L1295.6 676.1 L1295.5 674.4 L1295.2 672.7 L1294.7 671.0 L1294.0 669.4 L1293.1 668.0 L1292.0 666.6 L1290.8 665.4 L1289.4 664.3 L1287.9 663.4 L1286.3 662.7 L1284.6 662.3 L1282.9 661.8 L1281.2 661.6 L1279.4 661.6 L1277.6 661.9 L1275.8 662.3 L1274.1 663.0 L1272.5 663.9 L1270.9 665.0 L1269.5 666.2 L1268.3 667.7 L1267.2 669.3 L1266.2 671.0Z" fill="#17703c" />
<path d="M1247.3 681.8 L1245.8 684.0 L1244.8 686.4 L1244.1 689.0 L1243.8 691.6 L1243.9 694.4 L1244.5 697.1 L1245.5 699.6 L1246.9 702.1 L1248.6 704.3 L1250.7 706.2 L1253.1 707.8 L1255.7 709.0 L1258.5 709.7 L1261.4 709.9 L1264.3 709.7 L1267.1 709.0 L1269.8 708.0 L1272.3 706.5 L1274.5 704.7 L1276.5 702.5 L1278.0 700.1 L1279.2 697.5 L1280.0 694.7 L1280.4 691.9 L1280.3 689.0 L1279.8 686.1 L1278.8 683.4 L1277.4 680.9 L1275.7 678.5 L1273.6 676.5 L1269.3 674.9 L1270.6 680.2 L1272.1 681.7 L1273.4 683.4 L1274.4 685.3 L1275.1 687.4 L1275.5 689.5 L1275.6 691.6 L1275.3 693.8 L1274.7 695.9 L1273.8 697.8 L1272.7 699.6 L1271.2 701.2 L1269.5 702.6 L1267.7 703.7 L1265.7 704.5 L1263.6 704.9 L1261.4 705.1 L1259.3 704.9 L1257.2 704.4 L1255.1 703.7 L1253.2 702.7 L1251.4 701.4 L1249.8 699.8 L1248.5 698.0 L1247.4 696.0 L1246.7 693.8 L1246.2 691.6 L1246.2 689.2 L1246.4 686.8 L1247.1 684.5 L1248.0 682.2Z" fill="#17703c" />
<path d="M1330 670 H1313 q-3 0 -3 3 v1.5 q0 3 3 3 H1327 q3 0 3 3 v1.7 q0 3 -3 3 H1309.5" fill="none" stroke="#17703c" stroke-width="2.5" stroke-linecap="butt" stroke-linejoin="miter"/>
<path d="M1332 670 L1343.3 677.1 L1354.6 670 M1343.3 677.1 V685.2" fill="none" stroke="#17703c" stroke-width="2.5" stroke-linecap="butt" stroke-linejoin="miter"/>
<path d="M1357.5 685.2 V670 L1375.8 684.2 V669" fill="none" stroke="#17703c" stroke-width="2.5" stroke-linecap="butt" stroke-linejoin="miter"/>
<path d="M1399.8 670 H1381 V684.2 H1399.8 M1381 677.1 H1397" fill="none" stroke="#17703c" stroke-width="2.5" stroke-linecap="butt" stroke-linejoin="miter"/>
<path d="M1403.3 685.2 V670 H1420 q3.2 0 3.2 3.2 v0.8 q0 3.2 -3.2 3.2 H1403.3 M1415 677.6 L1424 685.2" fill="none" stroke="#17703c" stroke-width="2.5" stroke-linecap="butt" stroke-linejoin="miter"/>
<path d="M1448 670 H1430 q-3 0 -3 3 v8 q0 3 3 3 H1444 q3 0 3 -3 v-3 H1437" fill="none" stroke="#17703c" stroke-width="2.5" stroke-linecap="butt" stroke-linejoin="miter"/>
<path d="M1449.5 670 L1460.3 677.1 L1471.2 670 M1460.3 677.1 V685.2" fill="none" stroke="#17703c" stroke-width="2.5" stroke-linecap="butt" stroke-linejoin="miter"/>
<path d="M1493.8 670 H1476 q-3 0 -3 3 v1.5 q0 3 3 3 H1490.5 q3 0 3 3 v1.7 q0 3 -3 3 H1472.5" fill="none" stroke="#17703c" stroke-width="2.5" stroke-linecap="butt" stroke-linejoin="miter"/>
<path d="M1498.6 670 H1513.5 q3 0 3 3 v8.2 q0 3 -3 3 H1498.6 q-3 0 -3 -3 v-8.2 q0 -3 3 -3 Z" fill="none" stroke="#17703c" stroke-width="2.5" stroke-linecap="butt" stroke-linejoin="miter"/>
<path d="M1521 685.2 V670 H1537 M1521 677.1 H1535" fill="none" stroke="#17703c" stroke-width="2.5" stroke-linecap="butt" stroke-linejoin="miter"/>
<path d="M1532 670 H1552 M1542 670 V685.2" fill="none" stroke="#17703c" stroke-width="2.5" stroke-linecap="butt" stroke-linejoin="miter"/>
</svg>
</body></html>
